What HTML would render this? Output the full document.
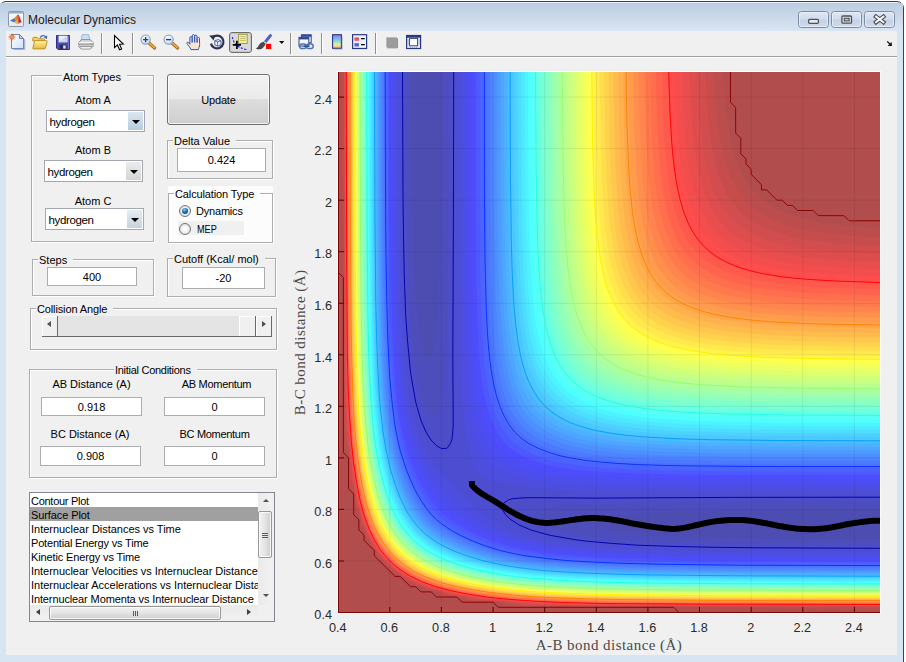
<!DOCTYPE html>
<html><head><meta charset="utf-8"><title>Molecular Dynamics</title>
<style>
html,body{margin:0;padding:0;background:#fff;}
body{width:906px;height:662px;overflow:hidden;position:relative;font-family:"Liberation Sans",sans-serif;font-size:11px;color:#000;}
#win{position:absolute;left:0;top:0;width:906px;height:662px;overflow:hidden;}
.frame{position:absolute;left:-1px;top:1px;width:903px;height:700px;border:1px solid #3f4247;border-radius:7px;background:#d7e4f2;box-shadow:inset 0 1px 0 #e6eef7;}
.titlebar{position:absolute;left:0;top:3px;width:903px;height:28px;background:linear-gradient(#bccde0,#d9e5f3);}
.title{position:absolute;left:28px;top:13px;font-size:12px;line-height:14px;color:#1a1a1a;white-space:nowrap;}
.client{position:absolute;left:6px;top:31px;width:891px;height:624px;background:#f0f0f0;}
.tbline{position:absolute;left:6px;top:56px;width:891px;height:1px;background:#a0a0a0;}
.tbline2{position:absolute;left:6px;top:57px;width:891px;height:1px;background:#fff;}
.plot{position:absolute;left:0;top:0;}
.panel{position:absolute;border:1px solid #adadad;box-shadow:1px 1px 0 #fff, inset 1px 1px 0 #fff;box-sizing:border-box;}
.ptitle{position:absolute;background:#f0f0f0;white-space:nowrap;line-height:13px;height:13px;padding:0 6px 0 1px;margin-left:1px;}
.lbl{position:absolute;white-space:nowrap;line-height:13px;text-align:center;transform:translateX(-50%);}
.edit{position:absolute;background:#fff;border:1px solid #abadb3;box-sizing:border-box;text-align:center;white-space:nowrap;}
.combo{position:absolute;background:#fff;border:1px solid #a4a8b0;box-sizing:border-box;white-space:nowrap;}
.combo span{position:absolute;left:2.5px;top:4px;line-height:14px;font-size:11.5px;letter-spacing:-0.35px;}
.combo i{position:absolute;right:1px;top:1px;bottom:1px;width:15px;background:linear-gradient(#ececec,#d4d4d4);}
.combo i:after{content:"";position:absolute;left:4px;top:8px;border:4px solid transparent;border-top:4px solid #000;border-bottom:0;left:3.5px;}
.combo.hot i{background:linear-gradient(#dbe7f0,#b4cde0);}
.wb{position:absolute;top:11px;height:16px;border:1px solid #7d8ca0;border-radius:3px;box-sizing:border-box;background:linear-gradient(#e3ebf5 0%,#d3dfee 48%,#c3d2e4 52%,#d2deec 100%);box-shadow:inset 0 0 0 1px rgba(255,255,255,.6);}
.wb b{position:absolute;background:#f4f6f9;border:1px solid #54575c;box-sizing:border-box;border-radius:1px;}
.btn{position:absolute;border:1px solid #707070;border-radius:3px;box-sizing:border-box;background:linear-gradient(#f2f2f2 0%,#ebebeb 48%,#dddddd 49%,#cfcfcf 100%);box-shadow:inset 0 0 0 1px rgba(255,255,255,.7);}
.btn span{position:absolute;left:0;right:0;top:19px;text-align:center;line-height:13px;}
.radio{position:absolute;width:12px;height:12px;border-radius:50%;border:1px solid #70747a;box-sizing:border-box;background:radial-gradient(circle at 50% 50%,#fdfdfd 25%,#cfcfcf 100%);}
.radio.on:after{content:"";position:absolute;left:2px;top:2px;width:6px;height:6px;border-radius:50%;background:radial-gradient(circle at 40% 30%,#7fd0f8 0%,#1568b0 50%,#0b3a70 100%);}
.slider{position:absolute;background:#e4e4e4;border-bottom:1px solid #696969;box-sizing:border-box;}
.sb{position:absolute;top:0;height:20px;background:#f0f0f0;border-right:1px solid #696969;box-sizing:border-box;box-shadow:inset 1px 1px 0 #fff;}
.al,.ar,.au,.ad{position:absolute;width:0;height:0;border:4px solid transparent;}
.sb .al{left:5px;top:5px;border-width:3.5px 4px 3.5px 0;border-right-color:#505050;}
.sb .ar{left:6px;top:5px;border-width:3.5px 0 3.5px 4px;border-left-color:#505050;}
.list{position:absolute;background:#fff;border:1px solid #828790;box-sizing:border-box;overflow:hidden;}
.rows{position:absolute;left:0;top:1px;width:228px;height:112px;overflow:hidden;}
.rows div{height:14px;line-height:14px;padding-left:1px;white-space:nowrap;letter-spacing:-0.1px;}
.rows .sel{background:linear-gradient(#a0a0a0,#a0a0a0) no-repeat 0 0/100% 13px;box-shadow:0 -1px 0 #a0a0a0;}
.vsb{position:absolute;right:0;top:0;width:16px;height:112px;background:linear-gradient(90deg,#eaeaea,#f2f2f2);}
.hsb{position:absolute;left:0;bottom:0;width:228px;height:16px;background:linear-gradient(#eaeaea,#f2f2f2);}
.list:after{content:"";position:absolute;right:0;bottom:0;width:16px;height:16px;background:#f0f0f0;}
.thumb{position:absolute;border:1px solid #979797;border-radius:2px;box-sizing:border-box;background:linear-gradient(90deg,#f2f2f2,#e4e4e4 50%,#cdcdcd);box-shadow:inset 0 0 0 1px rgba(255,255,255,.8);}
.thumb.h{background:linear-gradient(#f2f2f2,#e4e4e4 50%,#cdcdcd);}
.thumb s{position:absolute;left:3px;width:6px;height:1px;background:#5a5a5a;}
.thumb.h s{top:4px;width:1px;height:5px;}
.vsb .au{left:4.5px;top:5.5px;border-width:0 3.5px 3.5px 3.5px;border-bottom-color:#505050;}
.vsb .ad{left:4.5px;top:101px;border-width:3.5px 3.5px 0 3.5px;border-top-color:#505050;}
.hsb .al{left:6px;top:3.5px;border-width:3.5px 4px 3.5px 0;border-right-color:#404040;}
.hsb .ar{left:217px;top:3.5px;border-width:3.5px 0 3.5px 4px;border-left-color:#404040;}
.combo.hot2 i{background:linear-gradient(#e6ecf1,#c6d3de);}

</style></head><body>
<div id="win">
<div class="frame"></div>
<div class="titlebar"></div>
<div class="title">Molecular Dynamics</div>
<div class="client"></div>
<div class="tbline"></div><div class="tbline2"></div>

<!-- window buttons -->
<svg class="plot" width="906" height="40" viewBox="0 0 906 40">
<defs><linearGradient id="gwb" x1="0" y1="0" x2="0" y2="1"><stop offset="0" stop-color="#dfe8f3"/><stop offset="0.48" stop-color="#d0dcec"/><stop offset="0.52" stop-color="#c2d1e4"/><stop offset="1" stop-color="#d0dcec"/></linearGradient></defs>
<g stroke="#7b8aa6" fill="url(#gwb)">
<rect x="798.5" y="11.5" width="30" height="16" rx="3"/>
<rect x="831.5" y="11.5" width="30" height="16" rx="3"/>
<rect x="864.5" y="11.5" width="30" height="16" rx="3"/>
</g>
<g stroke="#ecf1f8" fill="none" opacity=".8">
<rect x="799.5" y="12.5" width="28" height="14" rx="2"/>
<rect x="832.5" y="12.5" width="28" height="14" rx="2"/>
<rect x="865.5" y="12.5" width="28" height="14" rx="2"/>
</g>
<rect x="808.6" y="19.3" width="9.8" height="4" rx="1" fill="#e6e8ec" stroke="#4d5058" stroke-width="1.3"/>
<rect x="841.9" y="16" width="9.6" height="7.2" rx="1" fill="#e2e5ea" stroke="#4d5058" stroke-width="1.3"/>
<rect x="844.3" y="18.3" width="4.8" height="2.6" fill="#b9c9df" stroke="#4d5058" stroke-width="1.1"/>
<path d="M876,16.6L883.4,22.2M883.4,16.6L876,22.2" stroke="#4d5058" stroke-width="4.2" stroke-linecap="square"/>
<path d="M876,16.6L883.4,22.2M883.4,16.6L876,22.2" stroke="#f3f5f8" stroke-width="2" stroke-linecap="square"/>
</svg>

<!-- Atom Types panel -->
<div class="panel" style="left:31px;top:75px;width:123px;height:167px"></div>
<div class="ptitle" style="left:61px;top:71px">Atom Types</div>
<div class="lbl" style="left:93px;top:94px">Atom A</div>
<div class="combo hot" style="left:46px;top:110px;width:99px;height:22px"><span>hydrogen</span><i></i></div>
<div class="lbl" style="left:93px;top:144px">Atom B</div>
<div class="combo" style="left:44px;top:160px;width:99px;height:22px"><span>hydrogen</span><i></i></div>
<div class="lbl" style="left:93px;top:195px">Atom C</div>
<div class="combo hot2" style="left:45px;top:208px;width:99px;height:22px"><span>hydrogen</span><i></i></div>

<!-- Update button -->
<div class="btn" style="left:167px;top:74px;width:103px;height:51px"><span style="letter-spacing:-0.2px">Update</span></div>

<!-- Delta Value -->
<div class="panel" style="left:167px;top:140px;width:106px;height:39px"></div>
<div class="ptitle" style="left:172px;top:135px">Delta Value</div>
<div class="edit" style="left:177px;top:148px;width:89px;height:24px;line-height:23px">0.424</div>

<!-- Calculation Type -->
<div style="position:absolute;left:168px;top:186px;width:105px;height:58px;background:#fcfcfc"></div>
<div class="panel" style="left:168px;top:193px;width:105px;height:50px"></div>
<div class="ptitle" style="left:173px;top:188px;background:#fcfcfc;letter-spacing:-0.12px">Calculation Type</div>
<div class="radio on" style="left:178.5px;top:204.5px"></div>
<div class="lbl" style="left:196px;top:205px;transform:none;letter-spacing:-0.2px">Dynamics</div>
<div style="position:absolute;left:178px;top:221px;width:66px;height:14px;background:#f0f0f0"></div>
<div class="radio" style="left:178.5px;top:223px"></div>
<div class="lbl" style="left:196.5px;top:223px;transform:scaleX(.83);transform-origin:0 0">MEP</div>

<!-- Steps -->
<div class="panel" style="left:32px;top:259px;width:122px;height:37px"></div>
<div class="ptitle" style="left:37px;top:254px">Steps</div>
<div class="edit" style="left:47px;top:267px;width:90px;height:19px;line-height:18px">400</div>

<!-- Cutoff -->
<div class="panel" style="left:167px;top:258px;width:109px;height:39px"></div>
<div class="ptitle" style="left:172px;top:253px">Cutoff (Kcal/ mol)</div>
<div class="edit" style="left:182px;top:267px;width:83px;height:22px;line-height:21px">-20</div>

<!-- Collision Angle -->
<div class="panel" style="left:30px;top:308px;width:247px;height:42px"></div>
<div class="ptitle" style="left:35px;top:303px;letter-spacing:-0.13px">Collision Angle</div>
<div class="slider" style="left:42px;top:316px;width:230px;height:21px">
 <div class="sb" style="left:0;width:16px"><i class="al"></i></div>
 <div class="sb" style="left:197px;width:17px"></div>
 <div class="sb" style="left:214px;width:16px"><i class="ar"></i></div>
</div>

<!-- Initial Conditions -->
<div class="panel" style="left:29px;top:369px;width:248px;height:109px"></div>
<div class="ptitle" style="left:113px;top:364px;letter-spacing:-0.28px">Initial Conditions</div>
<div class="lbl" style="left:91.5px;top:378px">AB Distance (A)</div>
<div class="lbl" style="left:216.5px;top:378px;letter-spacing:-0.3px">AB Momentum</div>
<div class="edit" style="left:41px;top:397px;width:101px;height:19px;line-height:18px">0.918</div>
<div class="edit" style="left:164px;top:397px;width:101px;height:19px;line-height:18px">0</div>
<div class="lbl" style="left:90px;top:428px">BC Distance (A)</div>
<div class="lbl" style="left:214.5px;top:428px;letter-spacing:-0.3px">BC Momentum</div>
<div class="edit" style="left:40px;top:446px;width:101px;height:20px;line-height:19px">0.908</div>
<div class="edit" style="left:164px;top:446px;width:101px;height:20px;line-height:19px">0</div>

<!-- Listbox -->
<div class="list" style="left:29px;top:492px;width:246px;height:130px">
 <div class="rows">
  <div style="letter-spacing:-0.27px">Contour Plot</div>
  <div class="sel">Surface Plot</div>
  <div style="letter-spacing:-0.02px">Internuclear Distances vs Time</div>
  <div style="letter-spacing:-0.18px">Potential Energy vs Time</div>
  <div style="letter-spacing:-0.13px">Kinetic Energy vs Time</div>
  <div style="letter-spacing:-0.04px">Internuclear Velocities vs Internuclear Distance</div>
  <div style="letter-spacing:-0.02px">Internuclear Accelerations vs Internuclear Distance</div>
  <div style="letter-spacing:-0.12px">Internuclear Momenta vs Internuclear Distance</div>
 </div>
 <div class="vsb">
  <i class="au"></i>
  <div class="thumb" style="left:0;top:18px;width:14px;height:47px"><s style="top:21px"></s><s style="top:23px"></s><s style="top:25px"></s></div>
  <i class="ad"></i>
 </div>
 <div class="hsb">
  <i class="al"></i>
  <div class="thumb h" style="left:19px;top:0.5px;width:172px;height:14.5px"><s style="left:83px"></s><s style="left:85px"></s><s style="left:87px"></s></div>
  <i class="ar"></i>
 </div>
</div>

<svg class="plot" width="906" height="662" viewBox="0 0 906 662">
<defs>
<linearGradient id="gpage" x1="0" y1="0" x2="1" y2="1"><stop offset="0" stop-color="#ffffff"/><stop offset="1" stop-color="#cfe0f8"/></linearGradient>
<linearGradient id="gfold" x1="0" y1="0" x2="0" y2="1"><stop offset="0" stop-color="#fff3a8"/><stop offset="1" stop-color="#e9b93a"/></linearGradient>
<linearGradient id="gcb" x1="0" y1="0" x2="0" y2="1"><stop offset="0" stop-color="#8d7be0"/><stop offset="0.3" stop-color="#7fb6f0"/><stop offset="0.55" stop-color="#9fe6c8"/><stop offset="0.75" stop-color="#f1ee9a"/><stop offset="1" stop-color="#f3a28c"/></linearGradient>
<linearGradient id="gml" x1="0" y1="0" x2="0" y2="1"><stop offset="0" stop-color="#ffffff"/><stop offset="1" stop-color="#e4e8ee"/></linearGradient>
<radialGradient id="glens" cx="0.4" cy="0.35" r="0.7"><stop offset="0" stop-color="#ffffff"/><stop offset="1" stop-color="#c5daf2"/></radialGradient>
</defs>
<!-- matlab title icon -->
<g transform="translate(8,11)">
<rect x="0.5" y="0.5" width="15" height="15" rx="1" fill="url(#gml)" stroke="#8c97a8"/>
<rect x="1" y="1" width="14" height="1.6" fill="#8fb4dc"/>
<path d="M2,9.5L6,7.2L8.2,9.2L6.2,11.5Z" fill="#3d7fc4"/>
<path d="M6,7.2C7.8,6 8.8,3.8 10,3.4L10.6,13L8.2,9.2Z" fill="#e8802a"/>
<path d="M10,3.4C11.4,3.6 12,8 14,11.6C12.6,10.8 11.6,12 10.6,13C10.4,9 10.2,6 10,3.4Z" fill="#c8251d"/>
<path d="M6.2,11.5L8.2,9.2L10.6,13C9.4,12.8 8,13 6.2,11.5Z" fill="#f3b04a"/>
</g>
<!-- new -->
<g transform="translate(9,34)">
<path d="M3.5,1.5H11.5L15.5,5.5V15.5H3.5Z" fill="#5b6ea8" opacity=".45" transform="translate(.8,.6)"/>
<path d="M2.5,0.5H10.5L14.5,4.5V14.5H2.5Z" fill="url(#gpage)" stroke="#6b84c4"/>
<path d="M10.5,0.5V4.5H14.5Z" fill="#b9cdf0" stroke="#6b84c4" stroke-linejoin="round"/>
<circle cx="3" cy="3" r="2.1" fill="#f7a23b" stroke="#e2552a" stroke-width=".8"/>
<path d="M3,-0.5V0.4M3,5.6V6.5M-0.5,3H0.4M5.6,3H6.5M0.6,0.6L1.2,1.2M5.4,0.6L4.8,1.2M0.6,5.4L1.2,4.8M5.4,5.4L4.8,4.8" stroke="#e2552a" stroke-width=".9"/>
</g>
<!-- open -->
<g transform="translate(32,34)">
<path d="M0.8,4.5Q0.8,3.3 2,3.3H5.2L6.6,4.8H11.6Q12.6,4.8 12.6,5.8V7H0.8Z" fill="#f1cf62" stroke="#b98a1c" stroke-width=".9"/>
<path d="M0.8,14.2L2.6,7.2Q2.8,6.6 3.6,6.6H14.4Q15.4,6.6 15.1,7.6L13.4,14.2Q13.2,14.9 12.4,14.9H1.6Q0.6,14.9 0.8,14.2Z" fill="url(#gfold)" stroke="#b98a1c" stroke-width=".9"/>
<path d="M8.2,3.6C9.6,1.2 12.6,1 14,3.4" fill="none" stroke="#3f6fb8" stroke-width="1.3"/>
<path d="M15.2,1.2L15,5L11.8,3.8Z" fill="#3f6fb8"/>
</g>
<!-- save -->
<g transform="translate(55,34)">
<path d="M1.5,1.5H14.5V15.5H3L1.5,14Z" fill="#4a4fb8" stroke="#2d2f86"/>
<rect x="3.6" y="1.6" width="8.8" height="6.6" fill="#e9eef9"/>
<path d="M3.6,8.2L12.4,1.6V8.2Z" fill="#cdd6ec"/>
<rect x="4.6" y="10.6" width="6.8" height="4.6" fill="#2b2b55"/>
<rect x="8.2" y="11.4" width="2.4" height="3.2" fill="#e6e6f2"/>
<rect x="13" y="2" width="1.2" height="13" fill="#7d82d8" opacity=".7"/>
</g>
<!-- print -->
<g transform="translate(78,34)">
<path d="M4.2,0.6H10.6L12,6.2H3Z" fill="#c9def6" stroke="#8aa6cf" stroke-width=".7"/>
<path d="M0.8,8.4L3.4,5.6H12L15.2,8.4V12.2L12.4,15H3.2L0.8,12.6Z" fill="#d6d6d6" stroke="#7c7c7c" stroke-width=".8"/>
<path d="M0.8,8.4H15.2" stroke="#fafafa" stroke-width="1"/>
<path d="M1.2,10.2H14.8M2,12.4H14" stroke="#8c8c8c" stroke-width=".9"/>
<path d="M3.4,13.8H12.4" stroke="#f4f4f4" stroke-width="1.2"/>
<rect x="12.2" y="9.2" width="1.4" height="1" fill="#4fc04f"/>
</g>
<!-- separators -->
<path d="M101.5,33V54M132.5,33V54M290.5,33V54M321.5,33V54M375.5,33V54" stroke="#8f8f8f" stroke-width="1"/>
<path d="M102.5,33V54M133.5,33V54M291.5,33V54M322.5,33V54M376.5,33V54" stroke="#fdfdfd" stroke-width="1"/>
<!-- pointer -->
<path d="M114.5,35.5V47.6L117.4,45L119.6,49.8L121.6,48.9L119.5,44.2L123.3,44Z" fill="#fff" stroke="#000" stroke-width="1.1" stroke-linejoin="miter"/>
<!-- zoom in -->
<g transform="translate(140,34)">
<path d="M9,9L14.6,14" stroke="#9a6a1a" stroke-width="3.2" stroke-linecap="round"/>
<path d="M9,8.8L14.4,13.6" stroke="#f2a63a" stroke-width="1.8" stroke-linecap="round"/>
<circle cx="5.6" cy="5.6" r="4.6" fill="url(#glens)" stroke="#8a9cc0" stroke-width="1.1"/>
<path d="M3,5.6H8.2M5.6,3V8.2" stroke="#1c3fa0" stroke-width="1.4"/>
</g>
<!-- zoom out -->
<g transform="translate(163,34)">
<path d="M9,9L14.6,14" stroke="#9a6a1a" stroke-width="3.2" stroke-linecap="round"/>
<path d="M9,8.8L14.4,13.6" stroke="#f2a63a" stroke-width="1.8" stroke-linecap="round"/>
<circle cx="5.6" cy="5.6" r="4.6" fill="url(#glens)" stroke="#8a9cc0" stroke-width="1.1"/>
<path d="M3,5.6H8.2" stroke="#1c3fa0" stroke-width="1.4"/>
</g>
<!-- hand -->
<g transform="translate(186,34)" stroke="#2c55b8" stroke-width="1" fill="#fbe3cf" stroke-linejoin="round">
<path d="M5,15.6C4.4,13.4 1.6,11 0.9,9.4C0.5,8.4 1.7,7.7 2.6,8.6L4.2,10.4L4.2,8H13.6V10.6C13.6,12.8 12.6,13.8 12.4,15.6Z"/>
<rect x="3.9" y="2.6" width="2.2" height="7.4" rx="1.1"/>
<rect x="6.3" y="0.6" width="2.2" height="9" rx="1.1"/>
<rect x="8.8" y="1.2" width="2.2" height="8.6" rx="1.1"/>
<rect x="11.3" y="3.4" width="2.2" height="7" rx="1.1"/>
<path d="M4.4,8.6H13.2V11H4.4Z" stroke="none"/>
</g>
<!-- rotate -->
<g transform="translate(209,34)">
<path d="M3.4,3.6A6.4,6.4 0 1 1 1.9,9.6" fill="none" stroke="#2b3350" stroke-width="2.2"/>
<path d="M0.2,1.6L6.2,1.2L4.6,6.6Z" fill="#2b3350"/>
<path d="M5.8,6.6L9.4,5.6L12,6.8V10.8L8.6,12.2L5.8,10.8Z" fill="#eef2fb" stroke="#3c55a8" stroke-width=".9" stroke-linejoin="round"/>
<path d="M5.8,6.6L8.6,7.9L12,6.8M8.6,7.9V12.2" fill="none" stroke="#3c55a8" stroke-width=".8"/>
</g>
<!-- data cursor (pressed) -->
<rect x="229.5" y="32.5" width="22" height="20" rx="2.5" fill="#d9d9d9" stroke="#6e6e6e"/>
<rect x="230.5" y="33.5" width="20" height="18" rx="2" fill="none" stroke="#c4c4c4"/>
<path d="M232.3,37C233.4,42.5 236.6,47.8 247,49.6" fill="none" stroke="#1a25d8" stroke-width="1.1" stroke-dasharray="2.2 1.4"/>
<rect x="238.6" y="34.3" width="8.6" height="9.2" fill="#f6f0a6" stroke="#9a9440" stroke-width=".9"/>
<path d="M240.2,36.6H245.6M240.2,38.6H245.6M240.2,40.6H245.6" stroke="#b3ad58" stroke-width=".8"/>
<path d="M232.8,44.9H241M236.9,40.8V49" stroke="#000" stroke-width="1.7"/>
<!-- brush -->
<g transform="translate(256,34)">
<path d="M8.2,7.6L13.6,0.8Q14.4,0 15.2,0.7Q16,1.5 15.3,2.3L9.8,9Z" fill="#4d66d6" stroke="#2e3f9e" stroke-width=".7"/>
<path d="M7.4,8.4L8.6,7.2L10.2,8.6L9,9.8Z" fill="#dfe3ee" stroke="#7d8090" stroke-width=".6"/>
<path d="M7.4,8.2C5.4,8.4 3.6,10 2.6,12.2C2,13.6 1,14.2 0.4,14.4C2.4,15.6 5.4,15 7,13.4C8.4,12 9,10.8 9,9.8Z" fill="#4a4a4a" stroke="#2a2a2a" stroke-width=".6"/>
<rect x="10" y="9.8" width="5.2" height="5.2" fill="#ff0000"/>
</g>
<path d="M279,41H284.4L281.7,44Z" fill="#111"/>
<!-- link -->
<g transform="translate(298,34)">
<rect x="3.4" y="0.8" width="9.8" height="8" fill="#eef3fb" stroke="#2d4796" stroke-width="1"/>
<rect x="3.4" y="0.8" width="9.8" height="2" fill="#2d4796"/>
<rect x="1" y="3.4" width="9.8" height="8.6" fill="#f4f7fc" stroke="#2d4796" stroke-width="1"/>
<rect x="1" y="3.4" width="9.8" height="2" fill="#2d4796"/>
<rect x="1.6" y="10" width="6.6" height="4.6" rx="2.3" fill="none" stroke="#4f72b4" stroke-width="1.5"/>
<rect x="8.4" y="10" width="6.8" height="4.6" rx="2.3" fill="none" stroke="#4f72b4" stroke-width="1.5"/>
<path d="M5.6,12.3H11.4" stroke="#2f4f92" stroke-width="1.4"/>
</g>
<!-- colorbar -->
<rect x="332.6" y="34.7" width="8.8" height="13.6" fill="url(#gcb)" stroke="#28397f" stroke-width="1.1"/>
<path d="M333.5,49.2H342.2V35.6" fill="none" stroke="#8a94b8" stroke-width=".8" opacity=".7"/>
<!-- legend -->
<rect x="352.6" y="34.7" width="14" height="13.8" fill="#eef2fa" stroke="#28397f" stroke-width="1.2"/>
<rect x="354.4" y="37.4" width="4.6" height="3.4" fill="#e8545c"/>
<rect x="354.4" y="43.1" width="4.6" height="3.4" fill="#5b62e6"/>
<path d="M361,38.6H364.8M361,44.6H364.8" stroke="#000" stroke-width="1.1"/>
<!-- hide plot tools -->
<rect x="386.5" y="37.5" width="10.4" height="9.8" fill="#9b9b9b"/>
<path d="M386.5,47.3V37.5H396.9" fill="none" stroke="#b9b9b9" stroke-width="1"/>
<path d="M387.2,47.8H397.4V38.4" fill="none" stroke="#858585" stroke-width="1"/>
<!-- show plot tools -->
<rect x="406.6" y="35.5" width="14" height="13" fill="#e8ecf5" stroke="#28397f" stroke-width="1.2"/>
<rect x="406.6" y="35.5" width="14" height="2.2" fill="#28397f"/>
<rect x="409.6" y="38.4" width="8" height="7.4" fill="#fff" stroke="#28397f" stroke-width=".9"/>
<path d="M407.6,40H408.8M407.6,42H408.8M407.6,44H408.8M418.6,40H419.8M418.6,42H419.8M418.6,44H419.8M410,47.2H411M412,47.2H413M414,47.2H415M416,47.2H417" stroke="#7d89b8" stroke-width=".9"/>
<!-- toolbar overflow arrow -->
<path d="M887.2,41.4L890.6,44.8M888.2,45.4H891.2V42.4" fill="none" stroke="#111" stroke-width="1.3"/>
</svg>

<svg class="plot" width="906" height="662" viewBox="0 0 906 662">
<rect x="337" y="71" width="544" height="543" fill="#fff"/>
<clipPath id="pc"><rect x="338" y="72" width="542" height="541"/></clipPath>
<g clip-path="url(#pc)">
<rect x="338" y="72" width="542" height="541" fill="#b14d4d"/>
<path d="M735.7,607.5L787.3,608.8 880.2,609.4 880.2,228.4 854.4,226.6 833.8,224.3 818.3,221.8 802.8,218.4 787.3,213.4 777,208.8 766.6,202.6 761.5,198.6 756.3,193.8 748.7,184.7 742.5,174.4 737.9,164.1 732.9,148.6 729.5,133.2 727,117.7 724.7,97.1 722.9,71.3 341.3,71.3 341.9,169.3 343.4,218.3 343.7,406.3 344.4,442.4 345,447.6 347.6,452.7 348.5,453.7 349.5,483.6 350.7,488.8 353.7,491.8 354.8,509.4 358.8,514 359.7,524.9 364,529.5 364.6,535.2 366.8,540.3 369.2,542.7 369.9,545.5 374.8,550.7 376,555.8 384.7,565 395,574.8 400.1,576 405.3,580.9 408.1,581.6 410.5,584 415.6,586.1 421.3,586.7 426,591 436.8,591.9 441.4,596 459.1,597 462.1,600.1 467.3,601.2 497.3,602.2 498.2,603.2 503.4,605.7 508.5,606.3 518.9,606.7 735.7,607.5Z" fill="#bc4d4d"/>
<path d="M503.4,602.3L508.5,604.1 518.9,605.4 549.8,606.3 880.2,607 880.2,237.5 854.4,236 833.8,234.1 813.1,231.2 797.6,228 782.1,223.5 771.8,219.3 761.5,213.7 756.3,210.2 750.4,205.3 745.3,200.2 741.1,195 735.7,186.7 729.7,174.4 724.6,158.9 721,143.5 717.8,122.9 715.3,97.1 713.7,71.3 343.7,71.3 344.2,365.1 344.5,406.3 345.1,427 345.8,437.3 346.6,442.4 348.5,447.8 349.4,457.9 350.4,478.5 351.4,483.6 353.7,487.8 354.7,494 355.5,504.3 356.9,509.4 358.8,511.6 359.7,514.6 360.3,519.7 361.5,524.9 364,527.7 365,530 365.9,535.2 369.2,539.4 371.2,545.5 374.3,548.6 382.7,561 389.8,568.1 402.2,576.4 405.3,579.5 411.4,581.6 415.6,584.9 420.8,585.8 423.2,586.7 426,589.3 431.1,590.5 436.3,591 439.3,591.9 441.4,593.8 446.6,595.3 456.9,596 463.1,597 467.3,599.3 472.4,600.3 493.1,601.3 503.4,602.3Z" fill="#c74d4d"/>
<path d="M513.7,603.3L524,604.5 534.4,605.1 575.7,605.9 880.2,606.6 880.2,246.1 854.4,244.8 828.6,242.7 807.9,240 789.1,236.3 772,231.1 761.5,226.6 751.2,220.7 746,216.9 740.8,212.4 735.7,206.8 730.6,200.2 725.4,191.2 720.2,179.4 715.5,164.1 712.2,148.6 709.2,128 706.8,102.3 705.1,71.3 344.1,71.3 344.6,344.5 345,390.9 345.6,416.6 346.7,432.1 348.5,441.7 351,473.3 351.7,478.5 353.7,484.3 356.7,504.3 358.8,509.1 360.4,514.6 361.2,519.7 365.7,530 367.1,535.2 369.2,537.8 372.6,545.5 374.3,547.2 379.5,554.7 384.7,560.9 389.9,566.1 396.1,571.3 403.6,576.4 405.3,578.1 413,581.6 415.6,583.6 420.8,585 431.1,589.5 436.3,590.3 441.7,591.9 446.6,594.1 466.6,597 472.4,599 477.6,599.8 498.2,601.1 509.3,602.2 513.7,603.3Z" fill="#d24d4d"/>
<path d="M518.9,602.7L529.2,603.8 539.5,604.4 586,605.4 880.2,606.1 880.2,254.2 849.2,252.8 823.4,250.8 802.8,248.2 782.1,244.3 766.6,239.8 756.3,235.7 746,230.2 739.7,225.9 733.6,220.8 725.4,211.6 721.1,205.3 718.1,200.2 715,193.8 711.5,184.7 707,169.3 703,148.6 700.5,128 698.5,102.3 697,71.3 344.6,71.3 345.1,339.3 345.6,385.7 346.3,411.5 347.3,427 348.5,434.9 351.9,473.3 353.7,480.5 356.6,499.1 357.9,504.3 358.8,506.5 361.1,514.6 362.2,519.7 368.4,535.2 374,545.5 379.5,553.4 384.7,559.7 391.1,566.1 397.4,571.3 405.3,576.8 415.6,582.4 431.1,588.6 436.3,589.6 444.4,591.9 446.6,592.9 451.8,594.1 470.4,597 477.6,598.8 518.9,602.7Z" fill="#de4d4d"/>
<path d="M524,602.2L534.4,603.3 549.8,604.1 596.3,605 880.2,605.7 880.2,261.9 844.1,260.4 818.3,258.4 797.6,256 777,252.3 761.5,248 756.3,246.3 746,241.8 735.7,235.9 730.5,232 725.4,227.5 720.2,221.9 715.4,215.6 709.5,205.3 705,195 703.2,189.9 699,174.4 695.2,153.8 692.8,133.2 690.9,107.4 689.3,71.3 345,71.3 345.5,323.9 345.9,370.3 346.6,401.2 347.4,416.6 352.1,468.2 357.5,499.1 363.1,519.7 369.2,534.6 372.1,540.3 378.4,550.7 382.3,555.8 389.8,563.9 395,568.4 400.1,572.4 410.5,578.6 416.2,581.6 431.1,587.6 451.8,593.2 482.7,598.6 524,602.2Z" fill="#e94d4d"/>
<path d="M534.4,602.4L565.3,603.9 611.8,604.6 880.2,605.2 880.2,269.2 844.1,267.9 813.1,265.7 787.3,262.6 766.6,258.6 751.2,254.1 745,251.7 735.7,247.3 725.4,240.7 720,236.3 715,231.3 710.6,225.9 707,220.8 701.4,210.5 699.1,205.3 695.5,195 691.4,179.6 687.8,158.9 685.1,133.2 683.4,107.4 682,71.3 345.5,71.3 346,318.7 346.5,370.3 347.4,401.2 349.9,437.3 352.9,468.2 358.3,499.1 364.1,519.7 369.2,532.8 372.9,540.3 379.3,550.7 384.7,557.4 393.4,566.1 399.9,571.3 407.9,576.4 415.6,580.5 431.3,586.7 451.8,592.4 456.9,593.4 487.9,598.5 534.4,602.4Z" fill="#f44d4d"/>
<path d="M544.7,602.3L575.7,603.5 627.3,604.2 880.2,604.8 880.2,276.2 844.1,275 813.1,273.1 787.3,270.4 766.6,267 747.7,262 734.4,256.9 725.4,252.1 720.2,248.7 711.4,241.4 706.6,236.3 702.6,231.1 699.2,225.9 694.4,216.9 689.2,203.6 684.3,184.7 680.8,164.1 678.1,138.3 676.2,107.4 675,71.3 345.9,71.3 346.4,313.6 347,365.1 347.9,396 350.5,437.3 353.7,468.2 359.1,499.1 363.2,514.6 366.7,524.9 371.1,535.2 376.8,545.5 384.3,555.8 389,561 394.5,566.1 401.2,571.3 409.4,576.4 419.8,581.6 431.1,585.9 441.4,589 456.9,592.7 472.4,595.4 487.9,597.8 503.4,599.3 544.7,602.3Z" fill="#ff4d4d"/>
<path d="M560.2,602.4L591.1,603.3 642.8,603.8 880.2,604.3 880.2,282.9 838.9,281.6 807.9,279.7 782.1,277.1 761.5,273.8 751.2,271.4 740.8,268.4 735.7,266.6 725.4,262.2 715,256.2 709.9,252.4 704.7,247.8 699.5,242.2 695.1,236.3 689,225.9 684.6,215.6 682.8,210.5 679.8,200.2 677.5,189.9 674.1,169.3 671.5,143.5 669.6,112.6 668.3,71.3 346.4,71.3 347,318.7 347.7,370.3 349,406.3 352,447.6 353.6,463 355.9,478.5 358.7,494 362.4,509.4 365.6,519.7 369.2,529.2 374.3,539.9 379.5,548.2 384.7,555 390.1,561 395.8,566.1 405.3,573 415.6,578.8 426,583.3 436.3,586.9 451.8,590.9 462.1,593 482.7,596.4 493.1,597.7 518.9,600.1 560.2,602.4Z" fill="#ff584d"/>
<path d="M575.7,602.3L658.2,603.5 880.2,603.9 880.2,289.2 838.9,288.1 807.9,286.5 777,283.5 756.3,280.2 746,278 735.7,275.1 727.9,272.3 720.2,269 715,266.3 708.1,262 701.5,256.9 696.1,251.7 691.7,246.6 688,241.4 684.1,234.7 679.9,225.9 674.6,210.5 671,195 667.7,174.4 664.7,143.5 663.1,112.6 662,71.3 346.8,71.3 347.4,318.7 348.2,370.3 349.6,406.3 352.5,447.6 353.7,458.7 356.6,478.5 358.8,491.4 361.8,504.3 364.6,514.6 369.2,527.2 374.3,538.2 379.5,546.8 384.7,553.7 391.3,561 397,566.1 405.3,572.1 415.6,577.9 426,582.5 438.3,586.7 456.9,591.3 472.4,594.1 492.3,597 529.2,600.2 575.7,602.3Z" fill="#ff634d"/>
<path d="M596.3,602.3L694.4,603.2 880.2,603.4 880.2,295.4 838.9,294.3 807.9,292.9 782.1,290.8 756.3,287.4 735.7,282.9 720.2,277.7 709.9,272.9 704.7,269.8 699.5,266.3 694.4,262 689.2,256.9 684.1,250.5 678.9,242.4 675.8,236.3 673.5,231.1 669.8,220.8 667,210.5 664.7,200.2 661.5,179.6 658.6,148.6 656.9,112.6 655.8,71.3 347.3,71.3 347.4,231.1 348,323.9 348.8,370.3 350.8,416.6 353.7,453.4 358.8,487.9 362.5,504.3 365.4,514.6 369.2,525.3 373.6,535.2 379.5,545.4 384.7,552.5 392.4,561 400.1,567.5 405.4,571.3 415.6,577.1 426,581.7 440.9,586.7 463,591.9 482.7,595.1 498.2,597.1 518.9,598.9 539.5,600.3 596.3,602.3Z" fill="#ff6e4d"/>
<path d="M622.1,602.2L715,602.8 880.2,603 880.2,301.3 833.8,300.2 797.6,298.4 771.8,296.2 746,292.4 735.7,290.2 725.4,287.4 709.9,281.6 701.9,277.5 694.4,272.6 689.2,268.4 684.1,263.4 678.9,257.3 675.1,251.7 672.2,246.6 668.6,239.1 663.4,224.8 661,215.6 658.2,202.5 655,179.6 652.8,153.8 651,117.7 649.9,71.3 347.7,71.3 347.9,225.9 348.4,318.7 349.6,375.4 351.3,416.6 353.7,447.7 356.3,468.2 358.8,484.2 362,499.1 364.6,509.4 369.2,523.2 374.5,535.2 379.5,543.9 384.7,551.2 393.6,561 400.1,566.5 406.9,571.3 415.9,576.4 427.7,581.6 443.6,586.7 467.3,592 487.9,595.1 508.5,597.5 529.2,599.1 555,600.4 622.1,602.2Z" fill="#ff794d"/>
<path d="M678.9,602.2L880.2,602.5 880.2,307 828.6,305.8 792.5,304.1 766.6,301.9 740.8,298.2 730.5,296 720.2,293.2 705.4,287.8 694.4,282 687.7,277.5 681.7,272.3 676.7,267.2 672.6,262 668.6,255.9 663.7,246.6 658,231.1 655.2,220.8 653,210.5 649.3,184.7 647.1,158.9 645.4,122.9 644.2,71.3 348.2,71.3 348.4,236.3 348.9,313.6 350.3,380.6 352.6,427 353.8,442.4 357,468.2 358.8,480.4 362.7,499.1 365.4,509.4 369.2,521 374.3,533.1 379.5,542.3 385.3,550.7 389.8,556 394.8,561 401,566.1 410.5,572.5 417.8,576.4 431.1,582 446.3,586.7 462.1,590.2 477.6,593 503.4,596.4 539.5,599.1 596.3,601.1 678.9,602.2Z" fill="#ff844d"/>
<path d="M518.9,597.2L565.3,599.6 632.4,601.2 720.2,601.8 880.2,602.1 880.2,312.5 828.6,311.4 792.5,309.9 766.6,307.9 740.8,304.6 730.5,302.6 720.2,300.2 709.9,297.1 699.5,293.1 689.2,287.7 681.9,282.6 675.9,277.5 671,272.3 666.9,267.2 663.4,261.9 658.2,252 652.4,236.3 649.7,225.9 647.5,215.6 643.8,189.9 641.3,158.9 639.7,122.9 638.7,71.3 348.7,71.3 349.2,287.8 350.1,349.6 351.5,396 353.7,434.2 356.9,463 358.8,476.3 362.3,494 364.7,504.3 367.8,514.6 371.6,524.9 376.4,535.2 379.5,540.8 386.4,550.7 395,559.9 400.1,564.4 410,571.3 415.6,574.4 420.8,577 432.1,581.6 451.8,587.3 477.6,592.3 498.2,595.1 518.9,597.2Z" fill="#ff8f4d"/>
<path d="M529.2,597.3L575.7,599.4 642.8,600.7 730.5,601.3 880.2,601.5 880.2,317.8 828.6,316.9 792.5,315.4 761.5,313.2 735.7,309.9 725.4,308 715,305.5 704.7,302.5 694.4,298.5 683.8,293 676.4,287.8 670.4,282.6 665.5,277.5 661.5,272.3 658.1,267.2 652.7,256.9 647.1,241.4 644.4,231.1 642.2,220.8 638.5,195 636,164.1 634.3,122.9 633.3,71.3 349.3,71.3 349.9,293 350.8,354.8 352.3,401.2 354.2,432.1 358.3,468.2 360.9,483.6 364,498.5 369.2,516.4 374.3,529.3 379.5,539.2 384.7,547 389.8,553.4 397.4,561 403.8,566.1 411.7,571.3 420.8,576.1 436.3,582.2 451.8,586.6 462.1,588.8 478.9,591.9 493.1,593.8 513.7,596.1 529.2,597.3Z" fill="#ff9b4d"/>
<path d="M534.4,597L580.8,598.9 642.8,600.1 730.5,600.7 880.2,600.9 880.2,323 828.6,322.1 787.3,320.6 756.3,318.3 730.5,315 720.2,313.1 709.9,310.7 699.5,307.6 689.2,303.6 678.9,298.2 673.7,294.8 668.6,290.8 663.4,286 658.2,280 653.1,272.6 647.6,262 643.6,251.7 640.5,241.4 638.1,231.1 636.2,220.8 632.8,195 630.6,164.1 629,122.9 628.1,71.3 349.9,71.3 350.5,293 351.4,354.8 352.9,401.2 353.7,416.8 355.3,437.3 358.8,467.5 364,495.2 369.4,514.6 374.3,527.3 378.2,535.2 384.6,545.5 389.8,552.1 398.7,561 405.3,566.1 413.4,571.3 420.8,575.1 431.1,579.5 441.4,583 455.7,586.7 467.3,589.1 483.5,591.9 498.2,593.8 534.4,597Z" fill="#ffa64d"/>
<path d="M549.8,597.2L596.3,598.7 658.2,599.6 880.2,600.3 880.2,328 823.4,327.1 782.1,325.5 751.2,323.3 725.4,320 715,318.1 704.7,315.6 694.4,312.5 684.1,308.5 673.7,303.2 666.4,298.1 660.4,293 655.5,287.8 651.5,282.6 647.9,277.3 642.6,267.2 638.6,256.9 635.5,246.6 633.1,236.3 631.2,225.9 627.9,200.2 625.6,169.3 624,128 623.1,71.3 350.5,71.3 351.1,298.1 352.1,360 353.7,405.5 356,437.3 359.7,468.2 364.5,494 368.6,509.4 372.1,519.7 376.6,530 382.3,540.3 389.7,550.7 394.5,555.8 400.1,561 406.8,566.1 415.1,571.3 425.5,576.4 436.3,580.5 446.6,583.6 459.1,586.7 477.6,590.2 488.3,591.9 508.5,594.2 529.2,596 549.8,597.2Z" fill="#ffb14d"/>
<path d="M560.2,597.1L606.6,598.4 668.6,599.1 880.2,599.7 880.2,332.9 823.4,332.1 782.1,330.7 751.2,328.6 725.4,325.6 704.7,321.7 694.4,319 684.1,315.4 678.9,313.3 668.6,307.8 661.9,303.3 655.8,298.1 650.9,293 646.8,287.8 642.8,281.7 637.6,271.7 633.8,262 630.7,251.7 628.3,241.4 626.4,231.1 623,205.3 620.5,169.3 619.1,128 618.2,71.3 351.1,71.3 351.7,293 352.6,354.8 354.1,401.2 357.2,442.4 358.8,457.4 361.3,473.3 364,488.2 367.9,504.3 371.2,514.6 374.3,523.1 379.5,533.9 383.3,540.3 389.8,549.3 395,555 401.5,561 408.4,566.1 416.9,571.3 427.7,576.4 441.4,581.3 451.8,584.1 462.7,586.7 482.7,590.3 498.2,592.4 518.9,594.5 560.2,597.1Z" fill="#ffbc4d"/>
<path d="M580.8,597.2L627.3,598.1 684.1,598.6 880.2,599 880.2,337.7 823.4,336.9 782.1,335.6 746,333.3 720.2,330.3 699.5,326.4 689.2,323.6 678.9,320 668.6,315.3 663.4,312.3 657.6,308.4 651.5,303.3 646.5,298.1 642.3,293 637.6,285.7 633.3,277.5 631.1,272.3 627.3,261.1 624.8,251.7 621.7,236.3 618.3,210.5 615.8,174.4 614.3,133.2 613.4,71.3 351.7,71.3 352.3,298.1 353.3,360 354.8,401.2 357.8,442.4 359,452.7 362.1,473.3 364,484.3 368.7,504.3 372,514.6 376.1,524.9 379.5,532 384.7,540.8 392.2,550.7 400.1,558.6 410,566.1 415.6,569.5 426,574.7 436.3,578.7 446.6,582 466.6,586.7 498.2,591.8 534.4,595 580.8,597.2Z" fill="#ffc74d"/>
<path d="M601.5,597.1L699.5,598.1 880.2,598.4 880.2,342.3 823.4,341.6 777,340.2 740.8,337.9 715,334.8 694.4,330.9 684.1,328.1 673.7,324.5 663.4,319.7 658.2,316.6 653.1,313.1 647.4,308.4 642.2,303.3 637.6,297.5 632.4,289.5 628.9,282.6 624.8,272.3 622.1,264 619.1,251.7 616.9,240.4 614.9,225.9 613.3,210.5 611.2,179.6 609.6,133.2 608.8,71.3 352.3,71.3 352.5,220.8 353,308.4 354.1,365.1 356.1,411.5 358.8,445.6 361.2,463 364,480.3 369.6,504.3 374.3,518.5 379.4,530 384.7,539.1 389.8,546.4 398.5,555.8 405.3,561.6 411.7,566.1 420.8,571.3 432.3,576.4 446.6,581.1 472.4,587.1 493.1,590.3 508.5,592.2 549.8,595.2 601.5,597.1Z" fill="#ffd24d"/>
<path d="M642.8,597.1L730.5,597.6 880.2,597.8 880.2,346.9 818.3,346.1 771.8,344.7 735.7,342.3 710.3,339.3 689.2,335.3 678.9,332.4 669.3,329 658.3,323.9 653.1,320.8 647.9,317.2 642.8,312.9 637.6,307.7 630.4,298.1 627.3,292.9 622.4,282.6 616.9,266.2 614.7,256.9 611.9,241.4 608.8,215.6 606.4,179.6 605,133.2 604.2,71.3 352.9,71.3 353.1,220.8 353.6,308.4 354.8,365.1 356.8,411.5 359.2,442.4 361.9,463 364.5,478.5 369,499.1 372.1,509.4 375.8,519.7 380.5,530 384.7,537.3 390.3,545.5 395,551 399.8,555.8 406,561 415.6,567.4 426,572.7 436.3,576.9 451.8,581.7 467.3,585.2 482.7,588 503.4,590.9 518.9,592.5 544.7,594.2 570.5,595.4 642.8,597.1Z" fill="#ffde4d"/>
<path d="M730.5,597L880.2,597.2 880.2,351.3 818.3,350.6 771.8,349.3 735.7,347.1 709.9,344.3 694.4,341.8 684.1,339.5 673.7,336.6 666.7,334.2 658.2,330.6 653.1,327.9 646.6,323.9 637.6,316.6 632.4,311.3 626.4,303.3 622.1,296 618.3,287.8 614.5,277.5 611.8,267.9 607.6,246.6 605.5,231.1 604,215.6 601.8,179.6 600.5,133.2 599.8,71.3 353.5,71.3 353.7,223.1 354.4,313.6 356,380.6 358.5,427 360.6,447.6 363.5,468.2 366.4,483.6 369.9,499.1 374.3,513.5 379,524.9 384.4,535.2 389.8,543.2 396.1,550.7 405.3,559.2 415.2,566.1 424.9,571.3 437.4,576.4 451.8,580.8 467.3,584.4 482.7,587.3 503.4,590.1 519.9,591.9 565.3,594.5 632.4,596.3 730.5,597Z" fill="#ffe94d"/>
<path d="M529.2,591.9L575.7,594.2 642.8,595.7 730.5,596.3 880.2,596.6 880.2,355.7 818.3,355 771.8,353.8 735.7,351.8 720.2,350.4 704.7,348.5 682.4,344.5 673.7,342.2 663.4,338.9 653.1,334.5 647.9,331.8 642.8,328.6 637.6,324.8 632.4,320.2 627.3,314.7 622.6,308.4 616.9,298.8 614.3,293 610.4,282.6 607.5,272.3 605.2,262 602.6,246.6 600.7,231.1 599.3,215.6 597.3,179.6 596.1,133.2 595.4,71.3 354.2,71.3 354.8,287.8 355.8,349.6 357.3,396 359.3,427 361.4,447.6 363.4,463 366.2,478.5 369.2,492.7 374.3,510.7 379.5,523.8 382.7,530 389,540.3 392.9,545.5 397.4,550.7 405.3,557.9 410.5,561.8 420.8,568.1 427.1,571.3 440.1,576.4 451.8,579.9 462.1,582.5 482.7,586.5 493.1,588 508.5,590 529.2,591.9Z" fill="#fff44d"/>
<path d="M539.5,591.9L586,593.9 647.9,595.1 735.7,595.6 880.2,595.9 880.2,359.9 813.1,359.2 766.6,358 730.5,356 715,354.6 699.5,352.6 678.9,348.9 668.6,346.2 658.2,342.8 647.9,338.3 640.6,334.2 633.3,329 627.3,323.6 622.1,317.8 616.9,310.6 612.8,303.3 608.3,293 604.9,282.6 602.2,272.3 598.5,251.7 596.5,236.3 595.1,220.8 593.1,184.7 591.9,138.3 591.2,71.3 354.9,71.3 355.5,287.8 356.5,349.6 358,396 360.5,432.1 364,461.7 369.2,489 374.9,509.4 379.5,521.4 383.7,530 389.8,539.9 395,546.5 404.3,555.8 410.5,560.6 419.1,566.1 426,569.6 431.1,572 443,576.4 461.8,581.6 472.4,583.7 489.2,586.7 503.4,588.6 539.5,591.9Z" fill="#ffff4d"/>
<path d="M555,592L601.5,593.6 663.4,594.5 880.2,595.1 880.2,364.1 813.1,363.4 761.5,362.1 725.4,360 709.9,358.6 694.4,356.7 683.1,354.8 668.6,351.6 658.2,348.5 647.9,344.5 638,339.3 632.4,335.7 627.3,331.6 622.1,326.8 616.9,320.8 612,313.6 606.6,303.3 604.5,298.1 601,287.8 598.3,277.5 596.1,267.2 593.7,251.7 590.7,220.8 588.8,184.7 587.7,138.3 587,71.3 355.6,71.3 356.3,293 357.3,354.8 358.8,398.5 361.3,432.1 363.6,452.7 365.1,463 370.1,488.8 374.2,504.3 377.8,514.6 382.2,524.9 388,535.2 395,544.9 400.1,550.6 405.9,555.8 412.8,561 421.1,566.1 431.1,571 441.4,574.9 451.8,578.1 465.8,581.6 482.7,584.8 494.7,586.7 513.7,589 534.4,590.7 555,592Z" fill="#f4ff58"/>
<path d="M570.5,591.9L616.9,593.2 673.7,593.9 880.2,594.4 880.2,368.1 813.1,367.6 761.5,366.3 725.4,364.4 694.4,361.3 678.9,358.9 668.6,356.7 658.2,353.9 647.9,350.3 637.6,345.5 632.4,342.5 627.3,339.1 621.4,334.2 616.3,329 611.8,323.5 606.6,315.5 601.5,304.9 598.9,298.1 595.7,287.8 593.3,277.5 590.5,262 588.5,246.6 587.1,231.1 585,195 583.6,143.5 582.9,71.3 356.3,71.3 357,293 358,354.8 359.5,396 362.1,432.1 364,450.2 366,463 369.2,480.9 372.3,494 375.2,504.3 379.5,516.5 384.7,527.6 389.1,535.2 395,543.2 401.8,550.7 407.6,555.8 415.6,561.6 423.3,566.1 434.4,571.3 449.2,576.4 462.1,579.8 472.4,582.1 493.1,585.6 508.5,587.6 529.2,589.6 570.5,591.9Z" fill="#e9ff63"/>
<path d="M591.1,591.9L689.2,593.3 880.2,593.7 880.2,372.2 807.9,371.5 756.3,370.3 720.2,368.3 688.5,365.1 673.7,362.7 663.4,360.4 653.1,357.6 642.8,353.9 633.7,349.6 627.3,345.9 618.6,339.3 613.3,334.2 608.9,329 605.2,323.9 601.5,317.5 596.3,306.1 593.5,298.1 590.6,287.8 588.4,277.5 585.9,262 582.7,231.1 580.8,195 579.5,143.5 578.9,71.3 357,71.3 357.2,215.6 357.7,298.1 358.8,360 360.6,401.2 362,421.8 363.9,442.4 368.6,473.3 374.3,498.3 379.5,513.8 382,519.7 384.7,525.4 390.4,535.2 398.3,545.5 405.3,552.5 410.5,556.7 420.8,563.5 431.1,568.7 441.4,572.8 452.6,576.4 472.4,581.2 487.9,583.9 507.3,586.7 544.7,589.8 591.1,591.9Z" fill="#deff6e"/>
<path d="M627.3,592L720.2,592.8 880.2,593 880.2,376.1 807.9,375.5 756.3,374.4 715,372.2 699.5,370.9 684.1,369 668.6,366.4 658.2,364.1 647.9,361.2 637.6,357.3 632,354.8 622.1,349.1 616,344.5 610.4,339.3 605.8,334.2 602,329 598.8,323.9 596.1,318.7 591.7,308.4 588.4,298.1 585.7,287.8 583.7,277.5 581.4,262 578.5,231.1 576.7,195 575.5,143.5 575,71.3 357.7,71.3 357.9,215.6 358.5,303.3 359.6,360 361.7,406.3 364.1,437.3 366.9,457.9 369.5,473.3 374.1,494 377.2,504.3 380.9,514.6 385.6,524.9 389.8,532.3 395.4,540.3 400.1,545.9 404.9,550.7 411,555.8 420.8,562.3 431.1,567.6 441.4,571.8 456.2,576.4 482.7,582.2 503.4,585.3 518.9,587.1 539.5,588.7 565.3,590.1 627.3,592Z" fill="#d2ff79"/>
<path d="M689.2,591.9L880.2,592.3 880.2,380 813.1,379.5 766.6,378.7 730.5,377.3 699.5,375.1 673.7,371.9 663.4,370.1 653.1,367.7 637.6,362.8 630.7,360 622.1,355.5 613.6,349.6 607.7,344.5 601.5,337.5 595.6,329 590.4,318.7 586.4,308.4 583.4,298.1 580,282.6 577.7,267.2 575.9,251.7 574.3,231.1 573.3,210.5 571.7,153.8 571.1,71.3 358.4,71.3 358.6,220.8 359.3,303.3 360.8,370.3 363.1,416.6 365,437.3 367.7,457.9 369.4,468.2 373.8,488.8 380,509.4 384.7,520.6 389.8,530.3 396.9,540.3 405.3,549.5 412.9,555.8 420.8,561.1 430.2,566.1 442.8,571.3 460,576.4 477.6,580.3 493.1,583 513.7,585.7 529.2,587.2 549.8,588.6 606.6,590.7 689.2,591.9Z" fill="#c7ff84"/>
<path d="M534.4,586.8L580.8,589.2 647.9,590.7 735.7,591.3 880.2,591.6 880.2,383.8 813.1,383.4 761.5,382.5 725.4,381.1 694.4,378.8 668.6,375.5 647.9,371.2 637.6,368.1 629.8,365.1 622.1,361.5 616.9,358.5 611.8,355.1 606.6,350.9 601.5,345.9 596,339.3 589.6,329 584.9,318.7 581.3,308.4 578.6,298.1 575.7,283.4 573.4,267.2 571.8,251.7 569.3,210.5 567.9,153.8 567.2,71.3 359.2,71.3 359.8,282.6 360.8,344.5 362.4,390.9 364.8,427 368.6,457.9 374.3,486.9 379.5,504.9 384.7,518 388.1,524.9 394.4,535.2 398.3,540.3 405.3,547.9 410.5,552.4 415.6,556.4 426,562.7 432.8,566.1 446,571.3 467.3,577.2 487.9,581.3 498.2,582.9 513.7,584.8 534.4,586.8Z" fill="#bcff8f"/>
<path d="M549.8,587L596.3,588.8 658.2,590 740.8,590.5 880.2,590.7 880.2,387.6 807.9,387.1 756.3,386.2 720.2,384.8 689.2,382.5 663.4,379.1 653.1,377.1 642.8,374.6 627.3,369.4 618,365.1 611.8,361.5 602.9,354.8 597.6,349.6 591.1,341.6 586.5,334.2 581.6,323.9 578,313.6 575.1,303.3 572,287.8 569.7,272.3 568.1,256.9 565.6,215.6 564.1,158.9 563.5,71.3 360,71.3 360.7,287.8 361.8,349.6 363.5,396 365.7,427 369.5,457.9 374.6,483.6 378.8,499.1 382.3,509.4 386.7,519.7 392.4,530 399.8,540.3 404.5,545.5 410.5,551 416.8,555.8 425.1,561 435.5,566.1 446.6,570.3 456.9,573.5 468.2,576.4 487.9,580.3 513.7,584 549.8,587Z" fill="#b1ff9b"/>
<path d="M565.3,586.9L611.8,588.4 668.6,589.3 880.2,589.9 880.2,391.3 807.9,390.9 756.3,390 715,388.4 684.1,386.1 658.2,382.6 647.9,380.6 637.6,378 629.4,375.4 622.1,372.6 616.9,370.3 607.8,365.1 600.8,360 596.3,355.9 591.1,350.3 586,343.3 580.8,334.2 576.4,323.9 573.1,313.6 570.5,303.3 567.6,287.8 565.5,272.3 564,256.9 561.7,215.6 560.3,158.9 559.7,71.3 360.8,71.3 361.5,282.6 362.4,344.5 364,390.9 366.6,427 368.9,447.6 370.5,457.9 374.3,478.2 377,488.8 379.9,499.1 384.7,512.4 389.8,523.4 393.8,530 400.1,538.8 405.3,544.6 412,550.7 418.9,555.8 427.5,561 438.4,566.1 451.8,570.9 462.1,573.8 472.7,576.4 493.1,580.2 503.4,581.8 524,584.1 565.3,586.9Z" fill="#a6ffa6"/>
<path d="M580.8,586.7L627.3,587.9 684.1,588.6 880.2,589.1 880.2,395 807.9,394.6 756.3,393.8 715,392.3 684.1,390.1 658.2,386.9 647.9,385.1 637.6,382.7 622.1,377.8 616.3,375.4 606.4,370.3 598.9,365.1 591.1,358.2 584,349.6 577.8,339.3 573.3,329 569.8,318.7 567.1,308.4 564.1,293 562,277.5 560.2,258.3 557.9,215.6 556.6,158.9 556.1,71.3 361.6,71.3 362.3,287.8 363.4,349.6 365,390.9 368,432.1 369.2,442.5 371.5,457.9 374.3,473.4 378.1,488.8 381.1,499.1 384.7,509.5 389.8,520.8 395,529.8 400.1,536.9 405.3,542.8 413.9,550.7 421.1,555.8 430,561 441.4,566.1 456.6,571.3 472.4,575.2 487.9,578.4 503.4,580.9 534.4,584.1 580.8,586.7Z" fill="#9bffb1"/>
<path d="M611.8,586.8L704.7,587.9 880.2,588.3 880.2,398.6 807.9,398.2 756.3,397.5 715,396.1 684.1,394.1 656.5,390.9 642.8,388.4 632.4,386 616.1,380.6 606.6,376.2 601.5,373.2 596.3,369.7 591.1,365.4 586,360.3 580.8,354 574.9,344.5 570.1,334.2 566.6,323.9 563.8,313.6 560.7,298.1 558.5,282.6 557,267.2 555.5,246.6 554.3,220.8 553,164.1 552.4,71.3 362.5,71.3 362.7,215.6 363.3,298.1 364.4,354.8 366.5,401.2 369.2,434.6 371.7,452.7 374.3,468.3 380.6,494 384.7,506.2 389.8,518.2 395,527.4 400.4,535.2 405.3,541 409.8,545.5 415.6,550.4 423.4,555.8 432.7,561 444.7,566.1 456.9,570.1 482.6,576.4 498.2,579.1 516.4,581.6 534.4,583.2 560.2,584.9 611.8,586.8Z" fill="#8fffbc"/>
<path d="M663.4,586.8L880.2,587.5 880.2,402.2 802.8,401.8 751.2,401 709.9,399.6 678.9,397.6 663.4,395.9 647.9,393.7 637.6,391.7 627.3,389.2 611.8,383.9 604.5,380.6 596.3,375.9 588.9,370.3 580.8,362.2 575.2,354.8 570.5,346.6 565.3,334.7 561.9,323.9 559.3,313.6 556.5,298.1 554.5,282.6 553,267.2 551.7,246.6 550.6,220.8 549.4,164.1 548.8,71.3 363.3,71.3 363.5,215.6 364.1,298.1 365.5,360 368.1,411.5 369.9,432.1 372.7,452.7 374.4,463 378.9,483.6 385.2,504.3 389.8,515.4 394.9,524.9 400.1,532.7 406.5,540.3 415.6,548.7 425.8,555.8 435.5,561 448.1,566.1 462.1,570.5 472.4,573 488.1,576.4 503.4,578.8 524,581.4 539.5,582.7 591.1,585.3 663.4,586.8Z" fill="#84ffc7"/>
<path d="M539.5,581.8L586,584.2 647.9,585.6 735.7,586.4 880.2,586.6 880.2,405.8 802.8,405.4 751.2,404.7 709.9,403.4 675.9,401.2 647.9,397.9 637.6,396 627.3,393.7 616.9,390.8 606.6,386.9 594.4,380.6 586,374.5 580.8,369.8 576.6,365.1 570.5,356.7 566.6,349.6 562.1,339.3 558.7,329 556.1,318.7 553.2,303.3 551.1,287.8 549.6,272.3 548.2,251.7 547.1,225.9 545.8,164.1 545.3,71.3 364.1,71.3 364.9,282.6 365.8,339.3 367.4,385.7 369.9,421.8 373.7,452.7 375.5,463 379.5,481.4 384.7,499.2 389.8,512.3 393.5,519.7 399.8,530 403.8,535.2 408.3,540.3 415.6,547 420.8,551 431.1,557.3 438.5,561 451.7,566.1 472.4,571.9 493.1,576.2 503.4,577.8 518.9,579.8 539.5,581.8Z" fill="#79ffd2"/>
<path d="M555,581.8L601.5,583.7 663.4,584.9 746,585.5 880.2,585.7 880.2,409.3 802.8,408.9 746,408.2 704.7,406.8 673.7,404.8 658.2,403.3 642.8,401.2 622.1,396.9 611.8,393.8 604,390.9 596.3,387.3 591.1,384.3 586,380.9 580.8,376.7 575.7,371.7 570.2,365.1 563.8,354.8 559.1,344.5 555.6,334.2 552.9,323.9 549.8,308.3 547.7,293 545.8,272.3 543.6,231.1 542.3,169.3 541.7,71.3 365.1,71.3 365.8,282.6 366.9,344.5 368.6,390.9 370.9,421.8 374.7,452.7 380,478.5 384.3,494 387.9,504.3 392.3,514.6 398,524.9 405.3,535 410.2,540.3 415.8,545.5 422.7,550.7 431,555.8 441.4,560.9 455.6,566.1 467.3,569.4 477.6,572 493.1,575.1 503.4,576.8 518.9,578.8 555,581.8Z" fill="#6effde"/>
<path d="M570.5,581.7L616.9,583.2 673.7,584.1 880.2,584.7 880.2,412.8 797.6,412.4 740.8,411.6 699.5,410.3 668.6,408.2 642.8,405.2 621.5,401.2 611.8,398.5 601.5,394.8 592.9,390.9 586,386.9 577.6,380.6 570.5,373.5 565.3,366.8 560.2,358.2 555,346.6 551,334.2 548.5,323.9 545.8,308.4 543.8,293 542.4,277.5 541,256.9 539.9,231.1 538.7,169.3 538.2,71.3 366,71.3 366.7,282.6 367.7,339.3 369.3,385.7 371.9,421.8 374.2,442.4 375.9,452.7 379.5,471.4 382.6,483.6 385.6,494 389.8,505.7 395,516.9 400.1,525.7 405.3,532.7 412.2,540.3 418.1,545.5 426,551.2 434,555.8 445.1,561 459.8,566.1 472.4,569.5 482.7,571.9 503.4,575.7 518.9,577.8 534.4,579.3 570.5,581.7Z" fill="#63ffe9"/>
<path d="M596.3,581.7L637.6,582.6 694.4,583.3 880.2,583.8 880.2,416.2 797.6,415.9 740.8,415.2 699.5,413.9 663.4,411.6 647.9,409.9 632.4,407.7 622.1,405.6 611.8,403.1 605.6,401.2 596.3,397.7 586,392.6 580.8,389.3 575.7,385.5 570.5,380.9 565.5,375.4 560.2,367.9 555.7,360 551.3,349.6 548,339.3 544.3,323.9 541.8,308.4 539.9,293 538.6,277.5 536.3,231.1 535.2,169.3 534.8,71.3 367,71.3 367.2,205.3 367.7,287.8 368.9,349.6 370.7,390.9 372.1,411.5 374,432.1 376.2,447.6 378.9,463 384.7,486.6 389.8,502.1 392.9,509.4 398.2,519.7 405,530 410.5,536.5 415.6,541.5 420.8,545.8 431.1,552.6 441.4,557.9 451.8,562 464.3,566.1 482.7,570.8 498.2,573.7 513.7,576.1 529.2,577.8 549.8,579.4 596.3,581.7Z" fill="#58fff4"/>
<path d="M632.4,581.6L720.2,582.5 880.2,582.8 880.2,419.7 792.5,419.4 735.7,418.6 689.2,417 658.2,414.9 630.9,411.5 616.9,408.8 607.4,406.3 601.5,404.5 591.1,400.5 582.3,396 575.7,391.7 568.4,385.7 563.4,380.6 560.2,376.6 555,368.8 550.5,360 546.5,349.6 543.5,339.3 541.1,329 538.5,313.6 536.6,298.1 534.9,277.5 532.9,236.3 531.8,174.4 531.3,71.3 367.9,71.3 368.2,215.6 368.8,298.1 370.1,354.8 372.4,401.2 375.2,432.1 377.4,447.6 380.1,463 384.7,481.9 388.4,494 392.2,504.3 397,514.6 403.2,524.9 410.5,534.3 416.6,540.3 422.9,545.5 431.1,551 441.4,556.4 452.6,561 469,566.1 493.1,571.7 513.7,574.9 529.2,576.7 549.8,578.4 575.7,579.8 632.4,581.6Z" fill="#4dffff"/>
<path d="M725.4,581.6L880.2,581.9 880.2,423.1 792.5,422.8 735.7,422.1 694.4,420.9 658.2,418.7 642.8,417.1 627.3,414.9 616.9,413 606.6,410.6 596.3,407.4 586,403.3 580.8,400.7 573.3,396 566.6,390.9 560.2,384.4 553.4,375.4 547.8,365.1 543.6,354.8 540.4,344.5 537,329 534.5,313.6 532.8,298.1 531.2,277.5 529.2,231.1 528.3,169.3 527.9,71.3 368.9,71.3 369.1,220.8 369.8,298.1 371.4,360 372.5,385.7 374.2,411.5 376.4,432.1 378.5,447.6 380.4,457.9 384.7,476.9 389.8,494 393.8,504.3 398.7,514.6 405,524.9 413.5,535.2 420.8,541.9 425.5,545.5 431.1,549.2 441.4,554.7 456.8,561 467.3,564.2 477.6,567 497.5,571.3 513.7,573.7 534.4,576.1 575.7,578.8 637.6,580.6 725.4,581.6Z" fill="#4df4ff"/>
<path d="M555,576.6L601.5,578.7 663.4,580 746,580.6 880.2,580.8 880.2,426.5 787.3,426.2 730.5,425.5 689.2,424.3 653.1,422 637.6,420.4 622.1,418.1 611.8,416.2 601.5,413.6 594.5,411.5 586,408.3 575.7,403.3 570.5,400.1 565.3,396.3 560.2,391.7 555,386 549.8,378.8 545,370.3 540.7,360 537.4,349.6 533.8,334.2 531.3,318.7 529.5,303.3 527.8,282.6 525.9,236.3 524.9,174.4 524.5,71.3 369.9,71.3 370.7,277.5 371.7,334.2 373.3,380.6 374.3,398.8 375.9,416.6 379.5,446.2 384.7,471.4 389.6,488.8 391.4,494 395,503.4 400.1,514.1 405.3,522.5 410.5,529.5 415.6,535.2 421.4,540.3 428.3,545.5 436.7,550.7 447.5,555.8 461.3,561 482.7,566.9 503.4,571 513.7,572.6 534.4,574.9 555,576.6Z" fill="#4de9ff"/>
<path d="M575.7,576.6L622.1,578.1 678.9,579 880.2,579.7 880.2,429.9 787.3,429.6 725.4,428.9 678.9,427.4 647.9,425.3 632.4,423.6 619.8,421.8 606.6,419.3 596.3,416.6 580.8,411.1 571.4,406.3 565.3,402.4 557.6,396 549.8,387.4 544.7,379.7 539.9,370.3 536,360 533,349.6 530.7,339.3 528.1,323.9 526.2,308.4 524.5,287.8 522.5,241.4 521.4,174.4 521,71.3 371,71.3 371.8,277.5 372.7,334.2 374.4,380.6 377.6,421.8 379.4,437.3 381.1,447.6 384.1,463 386.6,473.3 389.8,484.8 395,499.4 400.1,510.7 405.3,519.6 410.5,526.8 415.6,532.7 424.1,540.3 431.2,545.5 440.2,550.7 451.5,555.8 466.1,561 482.7,565.5 508.5,570.6 524,572.6 539.5,574.2 575.7,576.6Z" fill="#4ddeff"/>
<path d="M601.5,576.5L642.8,577.5 699.5,578.1 880.2,578.6 880.2,433.3 787.3,433.1 725.4,432.4 684.1,431.2 647.9,429 632.4,427.5 616.9,425.4 606.6,423.5 596.3,421.1 586,418 575.7,413.8 570.5,411.3 562.4,406.3 555.8,401.2 549.8,395.2 542.7,385.7 537.2,375.4 533,365.1 529.2,351.9 526.5,339.3 524.1,323.9 522.4,308.4 520.8,287.8 519,241.4 518,174.4 517.6,71.3 372.1,71.3 372.4,200.2 372.9,282.6 374.1,344.5 375.9,385.7 377.4,406.3 379.5,428.3 384.4,457.9 389.8,479.6 395,495 398.9,504.3 404.2,514.6 410.5,524 415.6,530.2 420.8,535.4 426.9,540.3 436.3,546.6 443.9,550.7 456.9,556.2 471.3,561 487.9,565.2 503.4,568.3 518.9,570.8 534.4,572.5 555,574.2 601.5,576.5Z" fill="#4dd2ff"/>
<path d="M647.9,576.5L735.7,577.2 880.2,577.5 880.2,436.7 787.3,436.5 725.4,435.8 684.1,434.7 647.9,432.7 632.4,431.3 616.9,429.4 596.3,425.4 586,422.6 575.7,418.9 565.3,413.9 560.2,410.7 555,407 549.8,402.4 544.7,396.8 539.5,389.7 534.4,380.6 530.1,370.3 526.9,360 523.3,344.5 520.9,329 519.1,313.6 517.5,293 515.6,246.6 514.6,179.6 514.2,71.3 373.2,71.3 373.5,215.6 374.2,298.1 375.7,354.8 378.2,401.2 379.5,416.7 381.4,432.1 384.7,452.4 387.1,463 389.8,474.1 395,490.3 400.1,503 405.3,512.9 410.5,520.9 418,530 423.4,535.2 431.1,541.2 437.9,545.5 447.9,550.7 460.6,555.8 477.6,561.2 498.6,566.1 513.7,568.6 534.4,571.3 560.2,573.3 586,574.6 647.9,576.5Z" fill="#4dc7ff"/>
<path d="M549.8,571.3L596.3,573.8 658.2,575.3 740.8,576.1 880.2,576.4 880.2,440.1 782.1,439.9 720.2,439.2 678.9,438.1 642.8,436.1 627.3,434.6 611.8,432.6 591.1,428.5 580.8,425.6 570.5,421.7 560.4,416.6 555,413.2 546.7,406.3 539.5,398.3 534.4,390.6 529.3,380.6 525.4,370.3 522.5,360 519.2,344.5 517,329 515.3,313.6 513.9,293 512.1,246.6 511.2,179.6 510.8,71.3 374.4,71.3 375.1,272.3 376.1,329 377.9,375.4 380.4,411.5 384.3,442.4 389.8,468.1 395,485.3 400.1,498.7 405.3,509.3 410.5,517.7 415.6,524.6 420.5,530 426.2,535.2 433.2,540.3 441.6,545.5 452.2,550.7 462.1,554.5 482.8,561 508.5,566.5 529.2,569.3 549.8,571.3Z" fill="#4dbcff"/>
<path d="M570.5,571.4L616.9,573.2 673.7,574.3 751.2,574.9 880.2,575.1 880.2,443.5 782.1,443.3 720.2,442.7 673.7,441.5 637.6,439.4 622.1,437.9 606.6,435.8 586,431.6 575.7,428.6 565.3,424.5 559.7,421.8 549.8,415.6 544.7,411.4 539.6,406.3 535.4,401.2 529.2,391.3 526.5,385.7 522.4,375.4 518.9,363.2 516,349.6 513.7,334.2 512,318.7 510.5,298.1 508.7,251.7 507.7,184.7 507.4,71.3 375.7,71.3 375.9,200.2 376.5,277.5 377.6,334.2 379.5,382.6 382.3,416.6 384.2,432.1 385.9,442.4 389,457.9 391.6,468.2 395,479.8 400.1,494 405.3,505.2 410.5,514.2 415.6,521.4 420.8,527.4 429.4,535.2 436.3,540.1 445.7,545.5 451.8,548.4 456.9,550.7 472.4,556.2 489.3,561 503.4,563.9 515.5,566.1 529.2,567.9 549.8,569.9 570.5,571.4Z" fill="#4db1ff"/>
<path d="M596.3,571.3L637.6,572.4 694.4,573.2 880.2,573.8 880.2,447 777,446.7 715,446.1 668.6,444.9 632.4,442.8 616.9,441.2 601.5,439.1 591.1,437.2 580.8,434.8 570.5,431.6 560.2,427.4 550,421.8 544.7,418 539.5,413.6 533,406.3 529.3,401.2 526.2,396 521.3,385.7 517.7,375.4 514.9,365.1 511.9,349.6 509.7,334.2 508.2,318.7 506.8,298.1 505.1,251.7 504.3,184.7 504,71.3 376.9,71.3 377.2,200.2 377.8,282.6 379.1,344.5 381.2,385.7 382.8,406.3 384.7,424.7 389.4,452.7 395,474 400.1,488.9 404.5,499.1 409.9,509.4 415.6,518 420.8,524.4 426,529.6 432.8,535.2 441.4,540.9 450.1,545.5 462,550.7 477,555.8 493.1,560.1 503.4,562.4 518.9,565 529.2,566.5 549.8,568.4 596.3,571.3Z" fill="#4da6ff"/>
<path d="M647.9,571.3L735.7,572.2 880.2,572.5 880.2,450.4 771.8,450.2 709.9,449.6 663.4,448.3 627.3,446.1 611.8,444.6 596.5,442.4 586,440.4 575.7,437.9 565.3,434.6 555,430.3 548.9,427 541.3,421.8 535.3,416.6 529.2,409.8 523.5,401.2 518.4,390.9 514.6,380.6 511.7,370.3 508.6,354.8 506.4,339.3 504.8,323.9 503.4,303.3 501.7,256.9 500.8,189.9 500.5,71.3 378.2,71.3 378.5,210.5 379.3,293 380.6,344.5 383,390.9 384.7,411.4 385.9,421.8 389.1,442.4 391.2,452.7 395,467.6 400.1,483.4 405.3,495.9 409.5,504.3 415.6,514.3 420.8,521 426,526.6 436.5,535.2 444.8,540.3 454.9,545.5 467.5,550.7 483.3,555.8 504.4,561 518.9,563.4 539.6,566.1 560.2,567.8 586,569.3 647.9,571.3Z" fill="#4d9bff"/>
<path d="M560.2,566.3L606.6,568.7 668.6,570.2 751.2,570.9 880.2,571.2 880.2,453.9 771.8,453.7 709.9,453.1 663.4,452 627.3,450 611.8,448.6 596.3,446.6 586,444.8 575.3,442.4 565.3,439.5 555,435.6 547.8,432.1 539.5,427 533.1,421.8 528.1,416.6 524,411.5 518.9,403.2 515.4,396 511.4,385.7 508.5,375.4 505.2,360 503,344.5 501.4,329 499.9,308.4 498.1,256.9 497.3,189.9 497.1,71.3 379.6,71.3 380.4,267.2 381.4,323.9 383.2,370.3 384.7,393.9 385.8,406.3 389.8,437.3 395,460.6 400.1,477.4 405.3,490.7 410.5,501.4 415.6,510.2 420.8,517.3 426,523.3 433.5,530 440.7,535.2 449.4,540.3 460.2,545.5 473.5,550.7 490.3,555.8 498.2,557.7 513.7,561 524,562.5 539.5,564.4 560.2,566.3Z" fill="#4d8fff"/>
<path d="M586,566.3L632.4,568 689.2,568.9 880.2,569.7 880.2,457.4 771.8,457.2 704.7,456.6 658.2,455.5 622.1,453.5 606.6,452 591.1,450 580.8,448.2 570.5,445.8 560.2,442.8 549.8,438.7 539.5,433.2 534.4,429.7 529.2,425.5 525.5,421.8 521.3,416.6 514.8,406.3 510.1,396 506.6,385.7 503.9,375.4 501,360 498.9,344.5 497.5,329 496.2,308.4 494.6,262 493.8,195 493.6,71.3 381.1,71.3 381.9,267.2 382.9,323.9 384.7,370.3 387.5,406.3 390.8,432.1 393.8,447.6 396.3,457.9 400.1,470.8 405.3,484.9 410.5,496.3 415.6,505.6 420.8,513.3 426,519.7 431.1,524.9 437.5,530 445.2,535.2 456.9,541.4 466,545.5 480.1,550.7 498,555.8 513.7,559 524.9,561 544.7,563.3 586,566.3Z" fill="#4d84ff"/>
<path d="M622.1,566.2L715,567.7 880.2,568.2 880.2,460.9 766.6,460.7 699.5,460.1 653.1,459 616.9,457 601.5,455.5 586,453.4 570.5,450.5 560.2,447.7 549.8,444.1 544.7,441.9 536,437.3 528.5,432.1 522.7,427 518.4,421.8 514.7,416.6 511.7,411.5 506.8,401.2 503.2,390.9 500.5,380.6 497.5,365.1 495.4,349.6 493.9,334.2 492.6,313.6 491,262 490.3,195 490.1,71.3 382.6,71.3 382.9,200.2 383.6,282.6 384.8,334.2 387.1,380.6 389.8,412.1 391.9,427 395,444.1 400.1,463.7 405.3,478.6 410.5,490.6 415.6,500.6 420.8,508.8 426,515.6 431.1,521.2 441.4,529.6 450.3,535.2 460.3,540.3 472.4,545.5 487.2,550.7 503.4,555 518.9,558 534.4,560.4 549.8,562 570.5,563.7 622.1,566.2Z" fill="#4d79ff"/>
<path d="M715,566.1L880.2,566.6 880.2,464.4 761.5,464.2 694.4,463.7 647.9,462.5 611.8,460.5 596.3,459 580.8,457 570.5,455.1 560.2,452.6 549.8,449.4 539.5,445.2 529.2,439.4 524,435.7 518.9,431.1 511.6,421.8 505.8,411.5 501.5,401.2 498.3,390.9 495.9,380.6 493.2,365.1 491.3,349.6 488.8,313.6 487.3,262 486.7,195 486.5,71.3 384.1,71.3 384.4,205.3 385.2,282.6 386.9,344.5 389.8,393.7 392.4,416.6 394.7,432.1 400.1,455.8 405.3,471.6 410.5,484.4 415.6,494.9 421.1,504.3 426,511 433.7,519.7 439.8,524.9 446.6,529.7 456,535.2 466.5,540.3 479.3,545.5 495.1,550.7 513.7,555.1 529.2,557.7 549.8,560.2 586,562.9 642.8,565 715,566.1Z" fill="#4d6eff"/>
<path d="M586,561.1L632.4,563 689.2,564.1 766.6,564.7 880.2,565 880.2,467.9 756.3,467.7 689.2,467.2 642.8,466.1 606.6,464.1 591.1,462.7 575.7,460.6 565.3,458.7 555,456.2 544.7,453 534.4,448.7 524,442.8 518.9,439 513.7,434.2 508.2,427 502.3,416.6 498,406.3 494.7,396 492.3,385.7 489.6,370.3 487.7,354.8 485.2,318.7 483.8,267.2 483.2,195 483,71.3 385.8,71.3 386.1,189.9 386.7,267.2 387.9,323.9 389.8,368.3 393.2,406.3 395,420.9 397,432.1 400.1,446.9 401.8,452.7 405.3,464 410.5,477.4 415.6,488.6 420.8,498 426,505.8 433,514.6 438.4,519.7 445,524.9 452.9,530 462.3,535.2 473.5,540.3 486.9,545.5 504.1,550.7 513.7,552.8 529.2,555.7 539.5,557 560.2,559.2 586,561.1Z" fill="#4d63ff"/>
<path d="M627.3,561.1L668.6,562 720.2,562.7 880.2,563.2 880.2,471.5 756.3,471.4 684.1,470.9 637.6,469.8 601.5,467.9 586,466.4 570.5,464.3 560.2,462.4 549.8,460 539.5,456.7 529.2,452.4 520.5,447.6 513.3,442.4 508.2,437.3 504.4,432.1 501.2,427 496.2,416.6 493.1,408.2 489.6,396 487.5,385.7 485.1,370.3 483.5,354.8 481.3,318.7 480.1,267.2 479.5,195 479.4,71.3 387.6,71.3 387.9,195 388.6,272.3 389.8,327.9 392,370.3 395,404.4 397.5,421.8 400.1,436.3 405.3,455.5 410.5,469.8 415.6,481.4 420.8,491.3 426,499.8 431.1,507 437.7,514.6 446.6,521.7 451,524.9 459.5,530 469.5,535.2 481.2,540.3 495.4,545.5 513.7,550.4 539.5,554.8 555,556.7 575.7,558.4 627.3,561.1Z" fill="#4d58ff"/>
<path d="M730.5,561L880.2,561.4 880.2,475.2 751.2,475.1 678.9,474.6 632.4,473.6 596.3,471.8 570.5,469.1 555,466.5 544.7,464 534.4,460.8 524,456.6 516.8,452.7 508.5,447 503.9,442.4 498.2,434.2 494.4,427 490.1,416.6 486.9,406.3 483.5,390.9 481.1,375.4 479.6,360 477.5,323.9 476.3,272.3 475.8,200.2 475.7,71.3 389.4,71.3 389.7,205.3 390.6,277.5 392.4,339.3 395.4,385.7 397.7,406.3 400.1,423.2 405.9,447.6 410.5,461.3 415.6,473.5 420.8,483.9 426,492.8 431.1,500.6 438.2,509.4 443.7,514.6 450.3,519.7 456.9,524.1 467,530 477.4,535.2 489.7,540.3 505.2,545.5 524,549.9 539.5,552.4 560.2,554.9 596.3,557.6 653.1,559.8 730.5,561Z" fill="#4d4dff"/>
<path d="M606.6,556L653.1,557.6 704.7,558.5 880.2,559.3 880.2,479 678.9,478.6 627.3,477.6 591.1,475.9 575.7,474.6 560.2,472.6 549.8,470.8 538.6,468.2 529.2,465.4 518.9,461.3 512.1,457.9 503.4,452.1 498.8,447.6 493.1,438.8 489.6,432.1 485.5,421.8 482.5,411.5 479.2,396 476.9,380.6 475.4,365.1 473.4,329 472.5,282.6 472,210.5 472,71.3 391.5,71.3 392.3,251.7 393.4,308.4 395.1,349.6 398.4,390.9 400.1,406.1 401.9,416.6 406.2,437.3 410.5,451.6 415.6,464.6 420.8,475.3 426,484.6 431.1,492.8 436.3,500.1 441.4,506.3 444.5,509.4 451.8,515.3 466.3,524.9 475.6,530 486.3,535.2 499.4,540.3 513.7,544.6 534.4,548.9 544.9,550.7 565.3,552.9 606.6,556Z" fill="#4d4df4"/>
<path d="M668.6,555.8L751.2,556.8 880.2,557.1 880.2,482.9 668.6,482.6 622.1,481.9 586,480.3 570.5,479.1 555,477.3 539.5,474.6 529.2,472.1 513.7,466.8 505.7,463 497.6,457.9 493.1,453.3 487.9,445.2 484.1,437.3 480.4,427 477.5,416.6 474.4,401.2 472.4,385.7 470.9,370.3 469.2,334.2 468.3,287.8 468,71.3 393.6,71.3 394,200.2 394.9,277.5 396.6,329 399.1,370.3 400.5,385.7 403.3,406.3 405.3,419 408.4,432.1 410.5,440.1 415.6,454.5 420.8,465.7 426,475.1 431.1,483.6 441.4,498 446.6,504.1 452.9,509.4 467.3,519.7 475.8,524.9 485.3,530 496.5,535.2 510.9,540.3 532,545.5 549.8,548.3 568.6,550.7 611.8,553.7 668.6,555.8Z" fill="#4d4de9"/>
<path d="M606.6,550.8L653.1,552.7 704.7,553.8 777,554.4 880.2,554.7 880.2,487.1 653.1,486.9 606.6,486.2 575.7,484.9 560.2,483.6 544.7,481.8 534.4,480.2 518.9,476.7 503.4,471.7 496,468.2 488.2,463 484.5,457.9 481.6,452.7 477.6,443.1 474.2,432.1 470.7,416.6 469.1,406.3 467.3,390.9 466,375.4 464.7,344.5 464,298.1 463.8,71.3 396.1,71.3 396.4,174.4 397,246.6 398.3,303.3 400.1,346.6 403.7,385.7 405.3,398.7 407.6,411.5 410.5,425.5 412.4,432.1 415.6,442.4 420.8,454.5 426,464.2 431.1,472.4 441.4,486.7 451.6,499.1 464.2,509.4 478.5,519.7 486.7,524.9 496.4,530 508.5,535.2 518.9,538.4 525.5,540.3 539.5,543.2 552.4,545.5 565.3,547.1 606.6,550.8Z" fill="#4d4dde"/>
<path d="M684.1,550.7L761.5,551.6 880.2,551.9 880.2,491.6 642.8,491.7 601.5,491.4 570.5,490.4 555,489.5 534.4,487.6 518.9,485.6 503.4,482.8 493.1,480.5 487.9,478.7 482.7,476.6 477.8,473.3 474.4,468.2 472.2,463 470.5,457.9 468.1,447.6 465.3,432.1 463.3,416.6 461.4,396 460.4,380.6 459.5,349.6 459.1,308.4 459.3,71.3 398.8,71.3 399.2,189.9 400.1,267.2 401.4,308.4 403.8,349.6 405.5,370.3 410.6,406.3 415.7,427 420.8,440.9 426,451.1 431.1,459.2 436.3,465.8 441.4,471.6 458.2,488.8 479.3,509.4 485.1,514.6 491.8,519.7 499.8,524.9 510.1,530 524.1,535.2 544.7,540.2 580.8,545.3 627.3,548.6 684.1,550.7Z" fill="#4d4dd2"/>
<path d="M637.6,545.6L678.9,547 725.4,547.8 880.2,548.7 880.2,496.7 596.3,497.5 524,496.6 513.7,497.1 508.5,497.9 503.4,499.5 499.2,504.3 499.9,509.4 503.3,514.6 508.8,519.7 517,524.9 528.8,530 546.6,535.2 575.6,540.3 606.6,543.4 637.6,545.6ZM436.3,447.7L441.4,451 446.6,451.8 451.8,446.9 453,442.4 454.1,432.1 453.4,354.8 454.2,71.3 402.1,71.3 402.6,184.7 403.5,256.9 405.3,315.5 407.8,349.6 410.5,375.4 415.6,404.4 417.6,411.5 420.8,422.2 426,434 431.1,442.1 436.3,447.7Z" fill="#4d4dc7"/>
<path d="M632.4,540.5L673.7,542.4 725.4,543.6 787.3,544.3 880.2,544.7 880.2,502.4 730.5,502.9 642.8,503.8 586,505.4 565.3,506.6 549.8,508.2 542.4,509.4 539.5,510.7 534,514.6 536.1,519.7 544,524.9 558.3,530 582.3,535.2 606.6,538.1 632.4,540.5ZM436.3,417L440.2,411.5 441.4,408.6 442.7,401.2 444.6,380.6 446.1,349.6 447.1,308.4 447.8,251.7 448.4,71.3 406.1,71.3 406.5,164.1 407.3,231.1 408.6,282.6 410.7,323.9 412.7,344.5 415.6,368.7 420.8,392.8 426,407.1 431.1,414.9 436.3,417Z" fill="#4d4dbc"/>
<path d="M658.2,535.3L699.5,537 746,538.1 880.2,539.2 880.2,509.5 771.8,510 704.7,510.9 653.1,512.4 617.7,514.6 606.6,516.5 593.6,519.7 594.8,524.9 612,530 637.6,533.2 658.2,535.3ZM426,356.3L431.1,357.5 433.3,349.6 436.3,333.5 437.9,308.4 439.4,272.3 440.3,225.9 441.4,71.3 411.6,71.3 412.7,205.3 413.8,251.7 415.3,287.8 417,308.4 420.8,339.1 426,356.3Z" fill="#4d4db1"/>
</g>
<path d="M389.8,72V613M338,561H880M441.4,72V613M338,509.4H880M493.1,72V613M338,457.9H880M544.7,72V613M338,406.3H880M596.3,72V613M338,354.8H880M647.9,72V613M338,303.3H880M699.5,72V613M338,251.7H880M751.2,72V613M338,200.2H880M802.8,72V613M338,148.6H880M854.4,72V613M338,97.1H880" stroke="#000" stroke-opacity="0.075" stroke-width="1" fill="none"/>
<g stroke-linejoin="round" clip-path="url(#pc)">
<path d="M880.2,548.3L756.3,547.8 715,547.3 678.9,546.6 637.6,545.2 611.8,543.4 586,541.1 575.7,539.8 549.3,535.2 531,530 519,524.9 510.9,519.7 505.4,514.6 502.4,509.4 502.5,504.3 503.4,503.3 508.5,499.9 511,499.1 513.7,498.6 524,497.8 534.4,497.7 596.3,498.1 730.5,497.4 880.2,497.2M453.7,71.3L453.4,220.8 452.8,354.8 453.2,416.6 453.1,427 452.2,437.3 451.8,439.9 450.9,442.4 447.6,447.6 446.6,448.4 441.4,448.5 436.3,445.5 431.1,440.1 426,432 420.8,420 415.6,401.7 411,375.4 409.8,365.1 407.4,339.3 405.6,313.6 404.2,272.3 403.5,236.3 403,195 402.5,71.3" stroke="#0000af" stroke-width="0.95" fill="none"/>
<path d="M880.2,565.6L740.8,565.2 658.2,564.2 622.1,563.3 591.1,562 572.6,561 549.8,558.9 525.2,555.8 513.7,553.6 500.8,550.7 484.1,545.5 471,540.3 460,535.2 451.8,530.6 446.6,527.3 441.4,523.6 436.3,519.5 431.4,514.6 427.2,509.4 420.8,500.1 415.6,490.9 412.2,483.6 410.5,479.9 405.8,468.2 400.1,450.2 397.2,437.3 395,425.8 392.5,406.3 390,380.6 389,365.1 387.7,334.2 386.7,298.1 386,256.9 385.6,210.5 385.2,71.3M484.3,71.3L484.4,195 485,262 486.2,308.4 487.2,329 488.3,344.5 489.8,360 492,375.4 494,385.7 496.5,396 499.9,406.3 502,411.5 504.5,416.6 508.5,423.8 510.7,427 514.7,432.1 520.1,437.3 524,440.3 529.2,443.7 534.4,446.5 539.5,448.9 549.5,452.7 560.2,455.8 570.5,458 586,460.5 601.5,462.2 616.9,463.4 637.6,464.6 663.4,465.4 689.2,465.9 756.3,466.5 880.2,466.6" stroke="#0030ff" stroke-width="0.95" fill="none"/>
<path d="M880.2,576.2L735.7,575.8 647.9,574.9 616.9,574.2 586,573.1 555,571.4 539.5,570.1 518.9,567.7 503.4,565.2 484,561 466.7,555.8 453.1,550.7 441.4,545 436.3,541.9 431.1,538.4 426,534.4 420.8,529.8 416.4,524.9 412.4,519.7 408.9,514.6 405.8,509.4 400.1,497.8 395,484.2 389.8,466.9 385.6,447.6 383.1,432.1 380.7,411.5 379.3,396 377.6,365.1 376.5,334.2 375.8,303.3 374.9,215.6 374.6,71.3M510.2,71.3L510.4,174.4 511.3,241.4 512,267.2 512.9,287.8 514.2,308.4 515.6,323.9 517.6,339.3 520.4,354.8 522.9,365.1 526.3,375.4 528.3,380.6 530.7,385.7 534.4,392.5 539.5,399.9 545.2,406.3 551.1,411.5 558.6,416.6 565.3,420.3 570.5,422.7 575.7,424.7 586,428 596.3,430.6 611.8,433.4 627.3,435.4 642.8,436.8 663.4,438.1 684.1,439 709.9,439.7 777,440.5 880.2,440.8" stroke="#009fff" stroke-width="0.95" fill="none"/>
<path d="M880.2,584L725.4,583.7 637.6,582.9 606.6,582.2 580.8,581.4 555,580 529.2,578 513.7,576.4 503.4,574.9 487.9,572.1 472.4,568.6 463.1,566.1 456.9,564.1 447.8,561 436.1,555.8 426,549.9 419.8,545.5 413.8,540.3 410.5,537 405.3,531 400.1,523.7 394.9,514.6 390.3,504.3 388.4,499.1 384.7,487.8 379.5,467.4 375.9,447.6 374.3,437.1 373.2,427 371.1,401.2 369.6,375.4 368.6,349.6 367.9,318.7 367.1,231.1 366.7,71.3M535.6,71.3L536.1,164.1 537,220.8 537.8,246.6 538.8,267.2 539.9,282.6 541.5,298.1 543.5,313.6 546.5,329 549.1,339.3 552.5,349.6 555,355.7 557,360 560.2,365.6 565.3,373.1 570.5,379.1 578,385.7 585.5,390.9 591.1,394 595.4,396 601.5,398.5 611.8,401.9 622.1,404.6 637.6,407.5 653.1,409.6 668.6,411.1 684.1,412.2 704.7,413.2 730.5,414 787.3,415 880.2,415.4" stroke="#20ffdf" stroke-width="0.95" fill="none"/>
<path d="M880.2,590.5L720.2,590.2 632.4,589.4 596.3,588.6 565.3,587.5 544.7,586.4 524,584.7 503.4,582.5 487.9,580 469.6,576.4 450.4,571.3 436.3,566.1 425.7,561 415.6,554.5 410.5,550.5 405.3,545.8 400.3,540.3 396.3,535.2 389.8,525.1 384.7,514.5 379.5,500.5 374.3,481.3 370.7,463 368.3,447.6 366,427 364.3,406.3 363.2,385.7 362.1,354.8 361.4,318.7 360.5,231.1 360.2,71.3M562.3,71.3L562.9,148.6 563.9,200.2 564.6,220.8 565.7,241.4 566.9,256.9 568.5,272.3 570.5,286.8 572.6,298.1 575,308.4 578.2,318.7 582.3,329 586,336.3 591.1,344.3 596.3,350.6 601.5,355.7 606.6,359.8 611.8,363.3 616.9,366.3 622.1,368.8 627.3,371 637.6,374.6 647.9,377.3 658.2,379.5 673.7,381.9 689.2,383.7 704.7,385 725.4,386.2 746,387 802.8,388.2 880.2,388.7" stroke="#8fff70" stroke-width="0.95" fill="none"/>
<path d="M880.2,596L720.2,595.7 632.4,595 596.3,594.2 565.3,593.2 537.8,591.9 518.9,590.4 493.1,587.4 477.6,584.8 461.3,581.6 442.5,576.4 429,571.3 418.8,566.1 410.5,560.8 405.3,556.8 400.1,552.2 395,546.7 390,540.3 384.7,532 379.5,521.8 374.3,508.3 369.2,489.6 365.9,473.3 363.4,457.9 360.4,432.1 358.8,413.2 357.5,385.7 356.5,354.8 355.8,318.7 355,231.1 354.8,71.3M591.8,71.3L592.5,138.3 593.8,184.7 594.8,205.3 595.8,220.8 597.2,236.3 599.2,251.7 601.5,265.2 604.3,277.5 607.3,287.8 611.3,298.1 613.8,303.3 616.6,308.4 620,313.6 624,318.7 628.9,323.9 634.8,329 642.2,334.2 652,339.3 658.2,341.9 668.6,345.4 678.9,348.1 689.2,350.2 699.5,351.9 715,353.9 730.5,355.3 746,356.3 766.6,357.3 813.1,358.6 880.2,359.3" stroke="#ffef00" stroke-width="0.95" fill="none"/>
<path d="M880.2,600.6L715,600.4 622.1,599.6 586,598.8 555,597.8 534.4,596.8 513.7,595.1 487.9,592.2 472.4,589.7 456.9,586.7 446.6,584.1 437.9,581.6 424.3,576.4 414,571.3 405.3,565.7 400.1,561.7 395,557 389.8,551.5 385.1,545.5 379.5,536.8 374.3,526.5 369.2,512.9 366.7,504.3 364,494 361,478.5 358.5,463 355.6,437.3 354,416.6 352.9,396 351.9,365.1 351.1,329 350.4,236.3 350.1,71.3M626.1,71.3L626.9,122.9 628.5,164.1 629.4,179.6 630.7,195 632.3,210.5 633.8,220.8 635.7,231.1 637.9,241.4 640.9,251.7 644.7,262 647.9,268.9 652.9,277.5 656.7,282.6 661.2,287.8 666.7,293 673.7,298.3 682.3,303.3 689.2,306.5 694.4,308.5 704.7,311.8 715,314.4 725.4,316.5 740.1,318.7 751.2,320 766.6,321.4 782.1,322.4 802.8,323.4 823.4,324.1 880.2,325" stroke="#ff8000" stroke-width="0.95" fill="none"/>
<path d="M880.2,604.4L709.9,604.2 601.5,603.5 560.2,602.4 534.4,601.2 508.5,599.3 487.9,597.2 467.3,594 451.8,590.9 435.7,586.7 421.5,581.6 410.5,576.2 405.3,573.1 400.1,569.6 395,565.5 390,561 385.3,555.8 381.2,550.7 377.7,545.5 374.6,540.3 369.2,529.3 364,515.1 359.8,499.1 356.8,483.6 353.6,463 351.4,442.4 349.6,416.6 348.3,390.9 347.3,349.6 346.6,241.4 346.3,71.3M668.7,71.3L670,112.6 671.8,143.5 673.2,158.9 674.5,169.3 676,179.6 677.9,189.9 680.2,200.2 683.2,210.5 685.1,215.6 689.2,225.3 692.4,231.1 695.6,236.3 699.5,241.5 704.7,247.2 709.8,251.7 715,255.6 720.2,258.9 726,262 735.7,266.2 740.8,268 751.2,271 761.5,273.4 771.8,275.2 782.1,276.8 792.5,278 807.9,279.4 838.9,281.2 880.2,282.5" stroke="#ff0000" stroke-width="0.95" fill="none"/>
<path d="M880.2,612.5L678.9,612.5 673.8,607.3 498.2,607.3 493.1,602.2 462.1,602.2 456.9,597 436.3,597 431.1,591.9 420.8,591.9 415.6,586.7 410.5,586.7 400.1,576.4 395,576.4 384.7,566.1 374.3,555.8 374.3,550.7 364,540.3 364,535.2 358.9,530 358.8,519.7 353.7,514.6 353.7,494 348.5,488.8 348.5,457.9 343.4,452.7 343.4,277.5 338.2,272.3 338.2,71.3M730.5,71.3L730.5,102.3 735.6,107.4 735.7,133.2 740.8,138.3 740.8,153.8 746,158.9 746,164.1 751.1,169.3 751.2,174.4 761.4,184.7 761.5,189.9 766.6,189.9 777,200.2 782.1,200.2 787.3,205.3 792.5,205.4 797.6,210.5 813.1,210.5 818.2,215.6 844.1,215.7 849.2,220.8 880.2,220.8" stroke="#8f0000" stroke-width="0.95" fill="none"/>
</g>
<path d="M338.5,72V612.5H880" stroke="#800000" stroke-width="1" fill="none"/>
<path d="M389.8,613V607M338,561.0H344M441.4,613V607M338,509.4H344M493.1,613V607M338,457.9H344M544.7,613V607M338,406.3H344M596.3,613V607M338,354.8H344M647.9,613V607M338,303.3H344M699.5,613V607M338,251.7H344M751.2,613V607M338,200.2H344M802.8,613V607M338,148.6H344M854.4,613V607M338,97.1H344" stroke="#5a0000" stroke-width="1" fill="none"/>
<path d="M471.9,481 L472.0,485.2 475.0,488.4 478.0,491.0 481.0,493.2 484.0,495.0 487.0,496.8 490.0,498.5 493.0,500.3 496.0,502.1 499.0,503.9 502.0,505.9 505.0,507.8 508.0,509.7 511.0,511.5 514.0,513.2 517.0,514.8 520.0,516.3 523.0,517.6 526.0,518.8 529.0,519.9 532.0,520.8 535.0,521.5 538.0,522.1 541.0,522.5 544.0,522.8 547.0,522.9 550.0,522.8 553.0,522.6 556.0,522.3 559.0,521.9 562.0,521.5 565.0,521.0 568.0,520.6 571.0,520.1 574.0,519.7 577.0,519.2 580.0,518.9 583.0,518.6 586.0,518.3 589.0,518.2 592.0,518.1 595.0,518.1 598.0,518.2 601.0,518.4 604.0,518.6 607.0,518.9 610.0,519.3 613.0,519.8 616.0,520.2 619.0,520.8 622.0,521.3 625.0,521.9 628.0,522.5 631.0,523.2 634.0,523.7 637.0,524.3 640.0,524.8 643.0,525.3 646.0,525.8 649.0,526.2 652.0,526.7 655.0,527.1 658.0,527.5 661.0,527.8 664.0,528.2 667.0,528.5 670.0,528.8 673.0,528.9 676.0,528.8 679.0,528.6 682.0,528.1 685.0,527.6 688.0,527.0 691.0,526.4 694.0,525.7 697.0,525.0 700.0,524.3 703.0,523.6 706.0,523.0 709.0,522.4 712.0,521.9 715.0,521.4 718.0,521.0 721.0,520.7 724.0,520.4 727.0,520.2 730.0,520.0 733.0,519.9 736.0,519.9 739.0,519.9 742.0,520.0 745.0,520.2 748.0,520.5 751.0,520.9 754.0,521.3 757.0,521.7 760.0,522.2 763.0,522.8 766.0,523.3 769.0,523.9 772.0,524.5 775.0,525.1 778.0,525.7 781.0,526.2 784.0,526.8 787.0,527.3 790.0,527.7 793.0,528.1 796.0,528.5 799.0,528.7 802.0,529.0 805.0,529.1 808.0,529.2 811.0,529.2 814.0,529.2 817.0,529.0 820.0,528.8 823.0,528.6 826.0,528.2 829.0,527.8 832.0,527.3 835.0,526.7 838.0,526.1 841.0,525.5 844.0,524.9 847.0,524.3 850.0,523.7 853.0,523.3 856.0,522.8 859.0,522.4 862.0,521.9 865.0,521.6 868.0,521.2 871.0,521.0 874.0,520.8 877.0,520.7 880.0,520.8 880.0,520.8" stroke="#000" stroke-width="6" fill="none" stroke-linejoin="round"/>
<g font-family="'Liberation Sans', sans-serif" font-size="12.7" fill="#2a2a2a">
<text x="337.7" y="632" text-anchor="middle">0.4</text><text x="332" y="619.2" text-anchor="end">0.4</text><text x="389.3" y="632" text-anchor="middle">0.6</text><text x="332" y="567.7" text-anchor="end">0.6</text><text x="440.9" y="632" text-anchor="middle">0.8</text><text x="332" y="516.1" text-anchor="end">0.8</text><text x="492.6" y="632" text-anchor="middle">1</text><text x="332" y="464.6" text-anchor="end">1</text><text x="544.2" y="632" text-anchor="middle">1.2</text><text x="332" y="413.0" text-anchor="end">1.2</text><text x="595.8" y="632" text-anchor="middle">1.4</text><text x="332" y="361.5" text-anchor="end">1.4</text><text x="647.4" y="632" text-anchor="middle">1.6</text><text x="332" y="310.0" text-anchor="end">1.6</text><text x="699.0" y="632" text-anchor="middle">1.8</text><text x="332" y="258.4" text-anchor="end">1.8</text><text x="750.7" y="632" text-anchor="middle">2</text><text x="332" y="206.9" text-anchor="end">2</text><text x="802.3" y="632" text-anchor="middle">2.2</text><text x="332" y="155.3" text-anchor="end">2.2</text><text x="853.9" y="632" text-anchor="middle">2.4</text><text x="332" y="103.8" text-anchor="end">2.4</text>
</g>
<g font-family="'Liberation Serif', serif" font-size="15" fill="#4a4a4a" letter-spacing="0.45">
<text x="609" y="650" text-anchor="middle">A-B bond distance (Å)</text>
<text transform="translate(304.5,342.4) rotate(-90)" text-anchor="middle">B-C bond distance (Å)</text>
</g>
</svg>
</div>
</body></html>
